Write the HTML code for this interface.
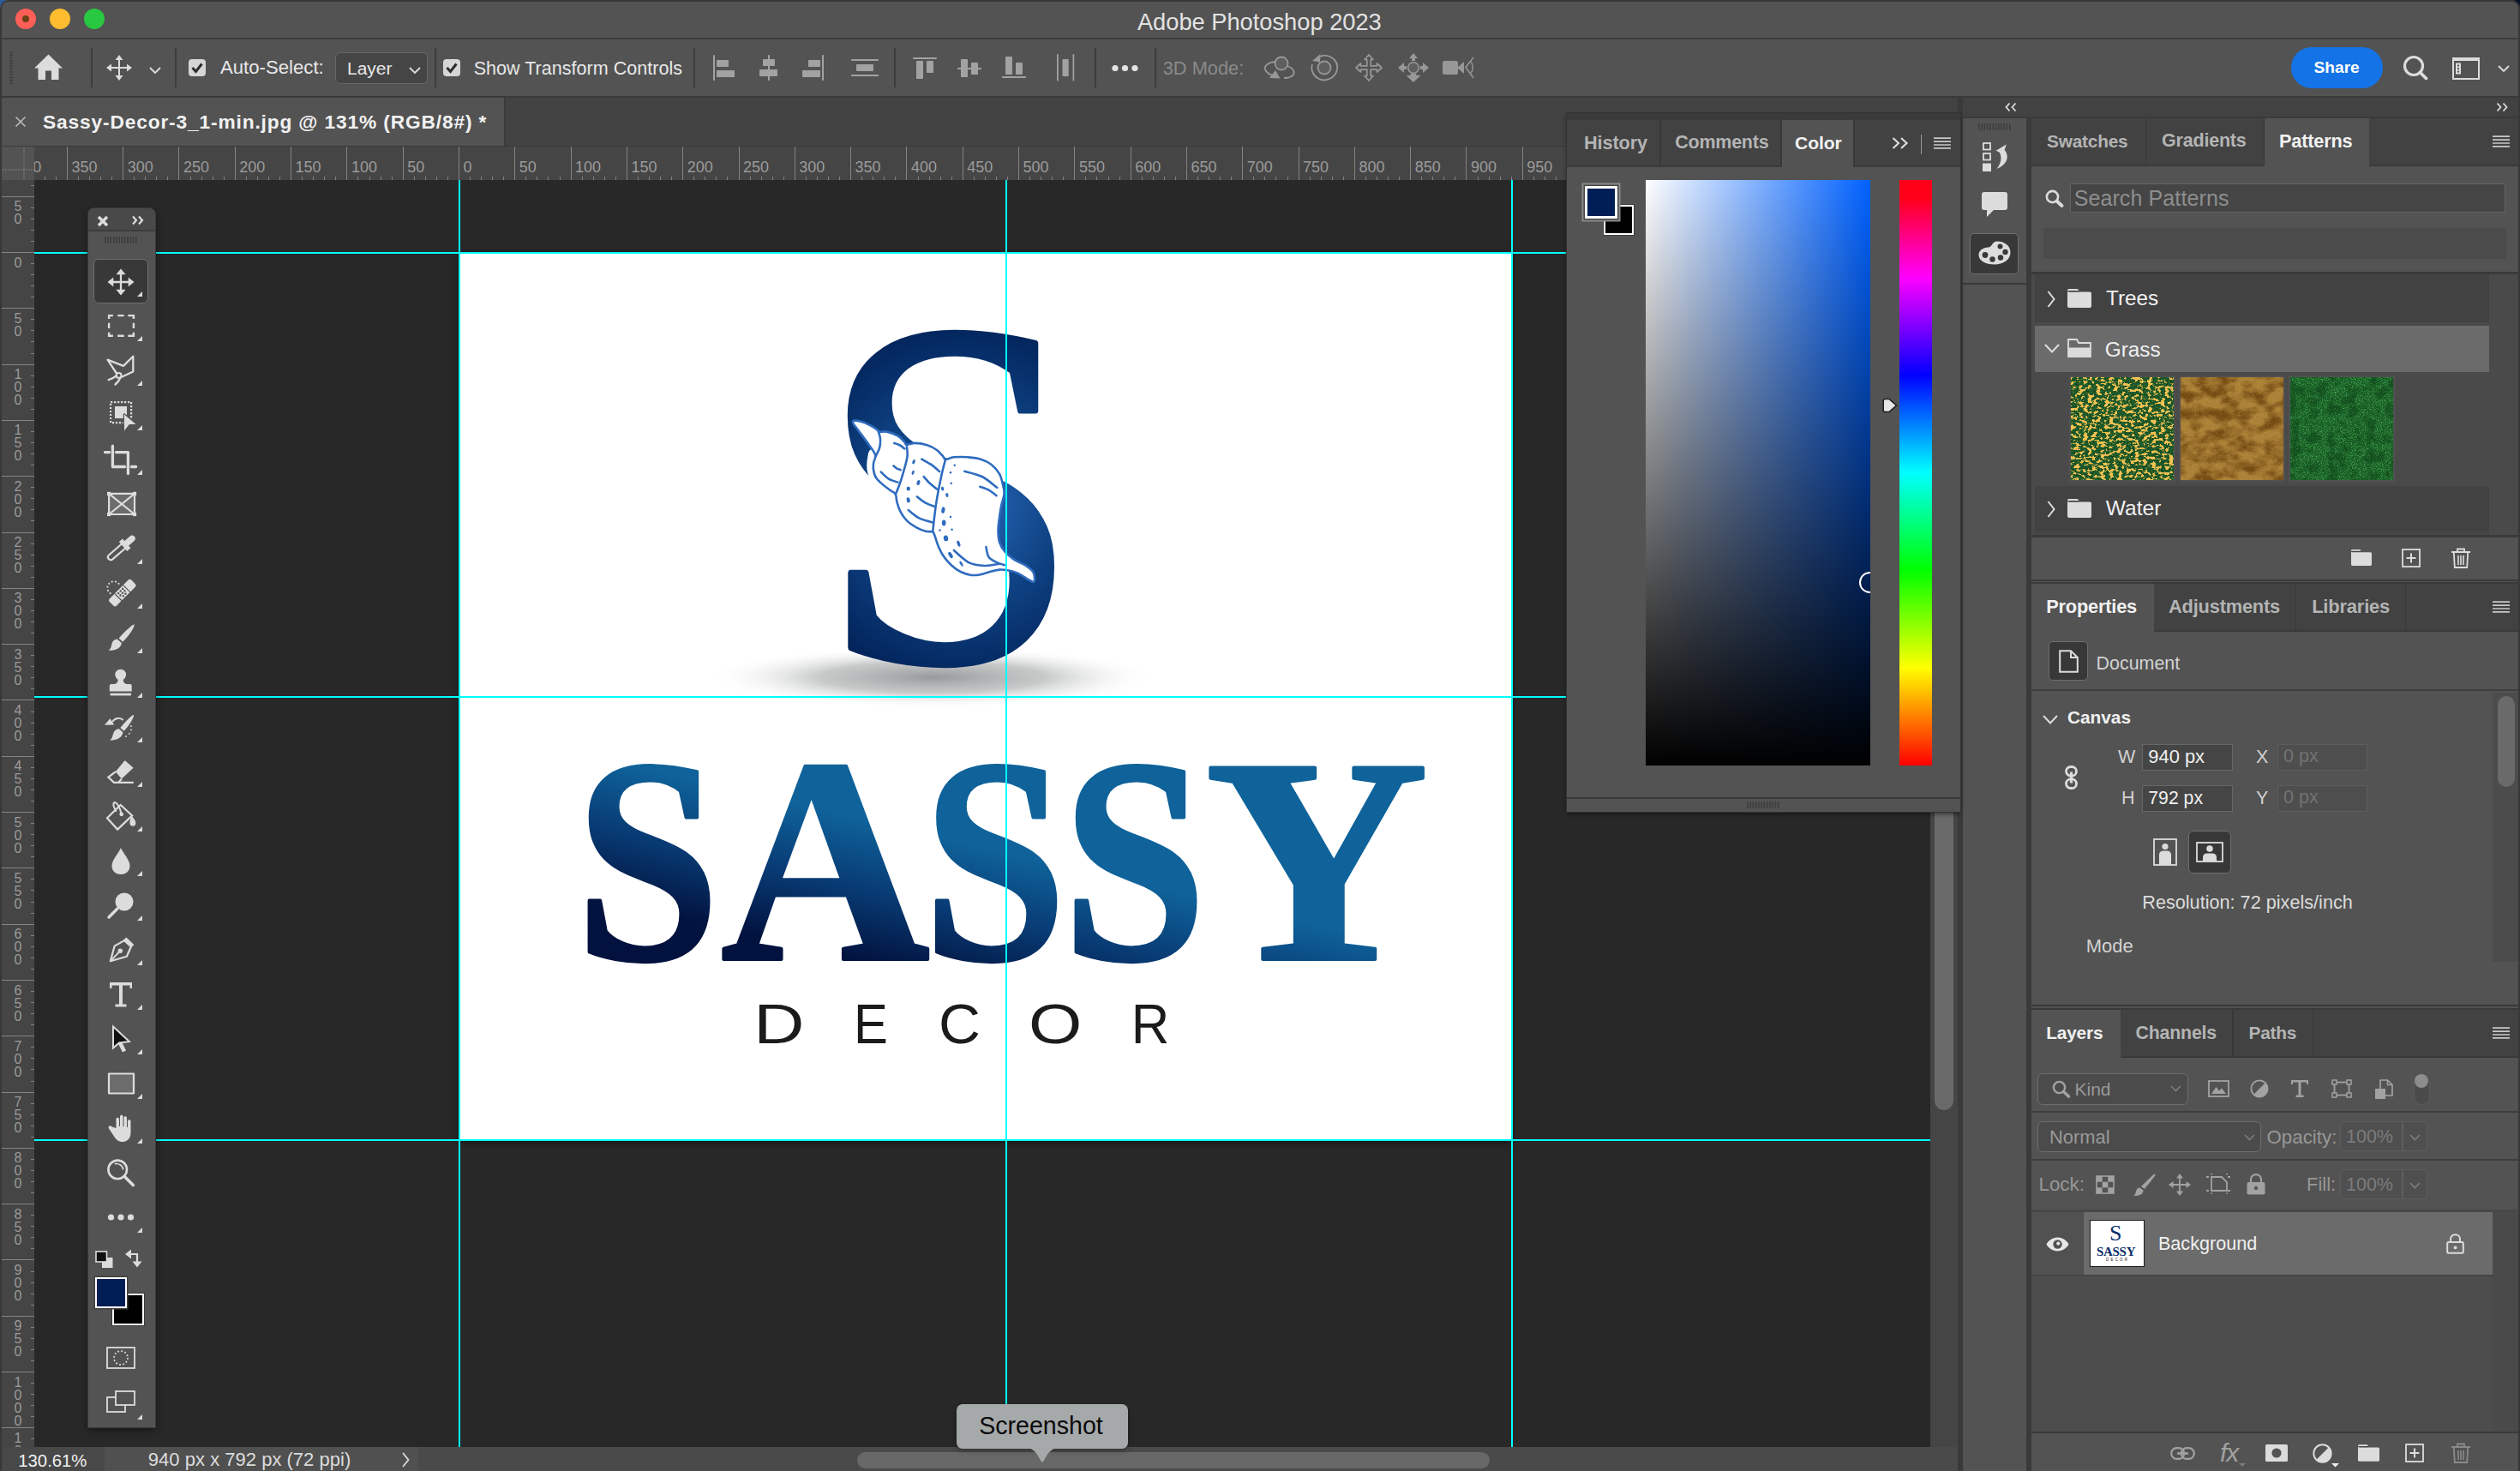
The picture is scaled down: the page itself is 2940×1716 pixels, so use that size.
<!DOCTYPE html><html lang="en"><head><meta charset="utf-8"><title>Adobe Photoshop 2023</title><style>
html,body{margin:0;padding:0;}
html{background:linear-gradient(to right,#2b5c9c,#051225);}
body{width:2940px;height:1716px;overflow:hidden;position:relative;background:#535353;font-family:"Liberation Sans",sans-serif;color:#ddd;border-radius:10px 10px 0 0;}
.a{position:absolute;}
.t{position:absolute;white-space:nowrap;line-height:1;}
.b{font-weight:bold;}
svg{position:absolute;overflow:visible;}
</style></head><body>
<div class="a" style="left:0px;top:44px;width:2940px;height:2px;background:#3c3c3c;"></div>
<div class="a" style="left:0px;top:112px;width:2940px;height:2px;background:#3a3a3a;"></div>
<div class="a" style="left:2px;top:114px;width:2285px;height:56px;background:#424242;"></div>
<div class="a" style="left:2px;top:114px;width:586px;height:56px;background:#535353;"></div>
<div class="a" style="left:2px;top:170px;width:2285px;height:2px;background:#3a3a3a;"></div>
<div class="a" style="left:588px;top:114px;width:2px;height:56px;background:#3a3a3a;"></div>
<div class="a" style="left:2px;top:171px;width:2285px;height:39px;background:#454545;"></div>
<div class="a" style="left:2px;top:171px;width:38px;height:39px;background:#535353;"></div>
<div class="a" style="left:2px;top:210px;width:38px;height:1478px;background:#454545;"></div>
<div class="a" style="left:40px;top:210px;width:2212px;height:1478px;background:#282828;"></div>
<div class="a" style="left:2252px;top:210px;width:32px;height:1478px;background:#454545;"></div>
<div class="a" style="left:2257px;top:900px;width:22px;height:395px;background:#6a6a6a;border-radius:11px;"></div>
<div class="a" style="left:2px;top:1688px;width:2282px;height:28px;background:#4a4a4a;"></div>
<div class="a" style="left:2px;top:1688px;width:119px;height:28px;background:#484848;"></div>
<div class="a" style="left:122px;top:1688px;width:366px;height:28px;background:#505050;"></div>
<div class="a" style="left:1000px;top:1694px;width:738px;height:19px;background:#686868;border-radius:10px;"></div>
<div class="a" style="left:0px;top:12px;width:2px;height:1704px;background:#383838;"></div>
<div class="a" style="left:2938px;top:12px;width:2px;height:1704px;background:#383838;"></div>
<div class="a" style="left:0;top:0;width:2936px;height:40px;border:2px solid #383838;border-bottom:none;border-radius:10px 10px 0 0;pointer-events:none"></div>
<div class="a" style="left:2284px;top:114px;width:6px;height:1602px;background:#3a3a3a;"></div>
<div class="a" style="left:2364px;top:136px;width:6px;height:1580px;background:#3a3a3a;"></div>
<div class="a" style="left:2290px;top:114px;width:648px;height:22px;background:#424242;"></div>
<div class="a" style="left:2290px;top:136px;width:648px;height:2px;background:#3a3a3a;"></div>
<div class="a" style="left:2290px;top:138px;width:74px;height:192px;background:#535353;"></div>
<div class="a" style="left:2290px;top:330px;width:74px;height:2px;background:#3a3a3a;"></div>
<div class="a" style="left:2290px;top:332px;width:74px;height:1384px;background:#535353;"></div>
<svg class="a" style="left:40px;top:171px" width="2212" height="39" viewBox="40 171 2212 39"><rect x="52" y="206" width="1" height="4" fill="#848484"/><rect x="65" y="206" width="1" height="4" fill="#848484"/><rect x="78" y="171" width="1" height="39" fill="#848484"/><rect x="91" y="206" width="1" height="4" fill="#848484"/><rect x="104" y="206" width="1" height="4" fill="#848484"/><rect x="117" y="206" width="1" height="4" fill="#848484"/><rect x="130" y="206" width="1" height="4" fill="#848484"/><rect x="143" y="171" width="1" height="39" fill="#848484"/><rect x="156" y="206" width="1" height="4" fill="#848484"/><rect x="169" y="206" width="1" height="4" fill="#848484"/><rect x="182" y="206" width="1" height="4" fill="#848484"/><rect x="195" y="206" width="1" height="4" fill="#848484"/><rect x="208" y="171" width="1" height="39" fill="#848484"/><rect x="222" y="206" width="1" height="4" fill="#848484"/><rect x="235" y="206" width="1" height="4" fill="#848484"/><rect x="248" y="206" width="1" height="4" fill="#848484"/><rect x="261" y="206" width="1" height="4" fill="#848484"/><rect x="274" y="171" width="1" height="39" fill="#848484"/><rect x="287" y="206" width="1" height="4" fill="#848484"/><rect x="300" y="206" width="1" height="4" fill="#848484"/><rect x="313" y="206" width="1" height="4" fill="#848484"/><rect x="326" y="206" width="1" height="4" fill="#848484"/><rect x="339" y="171" width="1" height="39" fill="#848484"/><rect x="352" y="206" width="1" height="4" fill="#848484"/><rect x="365" y="206" width="1" height="4" fill="#848484"/><rect x="378" y="206" width="1" height="4" fill="#848484"/><rect x="391" y="206" width="1" height="4" fill="#848484"/><rect x="404" y="171" width="1" height="39" fill="#848484"/><rect x="417" y="206" width="1" height="4" fill="#848484"/><rect x="431" y="206" width="1" height="4" fill="#848484"/><rect x="444" y="206" width="1" height="4" fill="#848484"/><rect x="457" y="206" width="1" height="4" fill="#848484"/><rect x="470" y="171" width="1" height="39" fill="#848484"/><rect x="483" y="206" width="1" height="4" fill="#848484"/><rect x="496" y="206" width="1" height="4" fill="#848484"/><rect x="509" y="206" width="1" height="4" fill="#848484"/><rect x="522" y="206" width="1" height="4" fill="#848484"/><rect x="535" y="171" width="1" height="39" fill="#848484"/><rect x="548" y="206" width="1" height="4" fill="#848484"/><rect x="561" y="206" width="1" height="4" fill="#848484"/><rect x="574" y="206" width="1" height="4" fill="#848484"/><rect x="587" y="206" width="1" height="4" fill="#848484"/><rect x="600" y="171" width="1" height="39" fill="#848484"/><rect x="613" y="206" width="1" height="4" fill="#848484"/><rect x="626" y="206" width="1" height="4" fill="#848484"/><rect x="639" y="206" width="1" height="4" fill="#848484"/><rect x="653" y="206" width="1" height="4" fill="#848484"/><rect x="666" y="171" width="1" height="39" fill="#848484"/><rect x="679" y="206" width="1" height="4" fill="#848484"/><rect x="692" y="206" width="1" height="4" fill="#848484"/><rect x="705" y="206" width="1" height="4" fill="#848484"/><rect x="718" y="206" width="1" height="4" fill="#848484"/><rect x="731" y="171" width="1" height="39" fill="#848484"/><rect x="744" y="206" width="1" height="4" fill="#848484"/><rect x="757" y="206" width="1" height="4" fill="#848484"/><rect x="770" y="206" width="1" height="4" fill="#848484"/><rect x="783" y="206" width="1" height="4" fill="#848484"/><rect x="796" y="171" width="1" height="39" fill="#848484"/><rect x="809" y="206" width="1" height="4" fill="#848484"/><rect x="822" y="206" width="1" height="4" fill="#848484"/><rect x="835" y="206" width="1" height="4" fill="#848484"/><rect x="848" y="206" width="1" height="4" fill="#848484"/><rect x="862" y="171" width="1" height="39" fill="#848484"/><rect x="875" y="206" width="1" height="4" fill="#848484"/><rect x="888" y="206" width="1" height="4" fill="#848484"/><rect x="901" y="206" width="1" height="4" fill="#848484"/><rect x="914" y="206" width="1" height="4" fill="#848484"/><rect x="927" y="171" width="1" height="39" fill="#848484"/><rect x="940" y="206" width="1" height="4" fill="#848484"/><rect x="953" y="206" width="1" height="4" fill="#848484"/><rect x="966" y="206" width="1" height="4" fill="#848484"/><rect x="979" y="206" width="1" height="4" fill="#848484"/><rect x="992" y="171" width="1" height="39" fill="#848484"/><rect x="1005" y="206" width="1" height="4" fill="#848484"/><rect x="1018" y="206" width="1" height="4" fill="#848484"/><rect x="1031" y="206" width="1" height="4" fill="#848484"/><rect x="1044" y="206" width="1" height="4" fill="#848484"/><rect x="1057" y="171" width="1" height="39" fill="#848484"/><rect x="1071" y="206" width="1" height="4" fill="#848484"/><rect x="1084" y="206" width="1" height="4" fill="#848484"/><rect x="1097" y="206" width="1" height="4" fill="#848484"/><rect x="1110" y="206" width="1" height="4" fill="#848484"/><rect x="1123" y="171" width="1" height="39" fill="#848484"/><rect x="1136" y="206" width="1" height="4" fill="#848484"/><rect x="1149" y="206" width="1" height="4" fill="#848484"/><rect x="1162" y="206" width="1" height="4" fill="#848484"/><rect x="1175" y="206" width="1" height="4" fill="#848484"/><rect x="1188" y="171" width="1" height="39" fill="#848484"/><rect x="1201" y="206" width="1" height="4" fill="#848484"/><rect x="1214" y="206" width="1" height="4" fill="#848484"/><rect x="1227" y="206" width="1" height="4" fill="#848484"/><rect x="1240" y="206" width="1" height="4" fill="#848484"/><rect x="1253" y="171" width="1" height="39" fill="#848484"/><rect x="1266" y="206" width="1" height="4" fill="#848484"/><rect x="1279" y="206" width="1" height="4" fill="#848484"/><rect x="1293" y="206" width="1" height="4" fill="#848484"/><rect x="1306" y="206" width="1" height="4" fill="#848484"/><rect x="1319" y="171" width="1" height="39" fill="#848484"/><rect x="1332" y="206" width="1" height="4" fill="#848484"/><rect x="1345" y="206" width="1" height="4" fill="#848484"/><rect x="1358" y="206" width="1" height="4" fill="#848484"/><rect x="1371" y="206" width="1" height="4" fill="#848484"/><rect x="1384" y="171" width="1" height="39" fill="#848484"/><rect x="1397" y="206" width="1" height="4" fill="#848484"/><rect x="1410" y="206" width="1" height="4" fill="#848484"/><rect x="1423" y="206" width="1" height="4" fill="#848484"/><rect x="1436" y="206" width="1" height="4" fill="#848484"/><rect x="1449" y="171" width="1" height="39" fill="#848484"/><rect x="1462" y="206" width="1" height="4" fill="#848484"/><rect x="1475" y="206" width="1" height="4" fill="#848484"/><rect x="1488" y="206" width="1" height="4" fill="#848484"/><rect x="1502" y="206" width="1" height="4" fill="#848484"/><rect x="1515" y="171" width="1" height="39" fill="#848484"/><rect x="1528" y="206" width="1" height="4" fill="#848484"/><rect x="1541" y="206" width="1" height="4" fill="#848484"/><rect x="1554" y="206" width="1" height="4" fill="#848484"/><rect x="1567" y="206" width="1" height="4" fill="#848484"/><rect x="1580" y="171" width="1" height="39" fill="#848484"/><rect x="1593" y="206" width="1" height="4" fill="#848484"/><rect x="1606" y="206" width="1" height="4" fill="#848484"/><rect x="1619" y="206" width="1" height="4" fill="#848484"/><rect x="1632" y="206" width="1" height="4" fill="#848484"/><rect x="1645" y="171" width="1" height="39" fill="#848484"/><rect x="1658" y="206" width="1" height="4" fill="#848484"/><rect x="1671" y="206" width="1" height="4" fill="#848484"/><rect x="1684" y="206" width="1" height="4" fill="#848484"/><rect x="1697" y="206" width="1" height="4" fill="#848484"/><rect x="1710" y="171" width="1" height="39" fill="#848484"/><rect x="1724" y="206" width="1" height="4" fill="#848484"/><rect x="1737" y="206" width="1" height="4" fill="#848484"/><rect x="1750" y="206" width="1" height="4" fill="#848484"/><rect x="1763" y="206" width="1" height="4" fill="#848484"/><rect x="1776" y="171" width="1" height="39" fill="#848484"/><rect x="1789" y="206" width="1" height="4" fill="#848484"/><rect x="1802" y="206" width="1" height="4" fill="#848484"/><rect x="1815" y="206" width="1" height="4" fill="#848484"/><rect x="1828" y="206" width="1" height="4" fill="#848484"/><rect x="1841" y="171" width="1" height="39" fill="#848484"/><rect x="1854" y="206" width="1" height="4" fill="#848484"/><rect x="1867" y="206" width="1" height="4" fill="#848484"/><rect x="1880" y="206" width="1" height="4" fill="#848484"/><rect x="1893" y="206" width="1" height="4" fill="#848484"/><rect x="1906" y="171" width="1" height="39" fill="#848484"/><rect x="1919" y="206" width="1" height="4" fill="#848484"/><rect x="1933" y="206" width="1" height="4" fill="#848484"/><rect x="1946" y="206" width="1" height="4" fill="#848484"/><rect x="1959" y="206" width="1" height="4" fill="#848484"/><rect x="1972" y="171" width="1" height="39" fill="#848484"/><rect x="1985" y="206" width="1" height="4" fill="#848484"/><rect x="1998" y="206" width="1" height="4" fill="#848484"/><rect x="2011" y="206" width="1" height="4" fill="#848484"/><rect x="2024" y="206" width="1" height="4" fill="#848484"/><rect x="2037" y="171" width="1" height="39" fill="#848484"/><rect x="2050" y="206" width="1" height="4" fill="#848484"/><rect x="2063" y="206" width="1" height="4" fill="#848484"/><rect x="2076" y="206" width="1" height="4" fill="#848484"/><rect x="2089" y="206" width="1" height="4" fill="#848484"/><rect x="2102" y="171" width="1" height="39" fill="#848484"/><rect x="2115" y="206" width="1" height="4" fill="#848484"/><rect x="2128" y="206" width="1" height="4" fill="#848484"/><rect x="2142" y="206" width="1" height="4" fill="#848484"/><rect x="2155" y="206" width="1" height="4" fill="#848484"/><rect x="2168" y="171" width="1" height="39" fill="#848484"/><rect x="2181" y="206" width="1" height="4" fill="#848484"/><rect x="2194" y="206" width="1" height="4" fill="#848484"/><rect x="2207" y="206" width="1" height="4" fill="#848484"/><rect x="2220" y="206" width="1" height="4" fill="#848484"/><rect x="2233" y="171" width="1" height="39" fill="#848484"/><rect x="2246" y="206" width="1" height="4" fill="#848484"/></svg>
<div class="a" style="left:40px;top:171px;width:60px;height:39px;overflow:hidden"><div class="t" style="left:-21.9px;top:15.3px;font-size:18px;color:#9b9b9b">400</div></div>
<div id="t1" class="t" style="left:83.40px;top:186.26px;font-size:18.00px;color:#9b9b9b;">350</div>
<div id="t2" class="t" style="left:148.70px;top:186.26px;font-size:18.00px;color:#9b9b9b;">300</div>
<div id="t3" class="t" style="left:214.00px;top:186.26px;font-size:18.00px;color:#9b9b9b;">250</div>
<div id="t4" class="t" style="left:279.30px;top:186.26px;font-size:18.00px;color:#9b9b9b;">200</div>
<div id="t5" class="t" style="left:344.60px;top:186.26px;font-size:18.00px;color:#9b9b9b;">150</div>
<div id="t6" class="t" style="left:409.90px;top:186.26px;font-size:18.00px;color:#9b9b9b;">100</div>
<div id="t7" class="t" style="left:475.20px;top:186.26px;font-size:18.00px;color:#9b9b9b;">50</div>
<div id="t8" class="t" style="left:540.50px;top:186.26px;font-size:18.00px;color:#9b9b9b;">0</div>
<div id="t9" class="t" style="left:605.80px;top:186.26px;font-size:18.00px;color:#9b9b9b;">50</div>
<div id="t10" class="t" style="left:671.10px;top:186.26px;font-size:18.00px;color:#9b9b9b;">100</div>
<div id="t11" class="t" style="left:736.40px;top:186.26px;font-size:18.00px;color:#9b9b9b;">150</div>
<div id="t12" class="t" style="left:801.70px;top:186.26px;font-size:18.00px;color:#9b9b9b;">200</div>
<div id="t13" class="t" style="left:867.00px;top:186.26px;font-size:18.00px;color:#9b9b9b;">250</div>
<div id="t14" class="t" style="left:932.30px;top:186.26px;font-size:18.00px;color:#9b9b9b;">300</div>
<div id="t15" class="t" style="left:997.60px;top:186.26px;font-size:18.00px;color:#9b9b9b;">350</div>
<div id="t16" class="t" style="left:1062.90px;top:186.26px;font-size:18.00px;color:#9b9b9b;">400</div>
<div id="t17" class="t" style="left:1128.20px;top:186.26px;font-size:18.00px;color:#9b9b9b;">450</div>
<div id="t18" class="t" style="left:1193.60px;top:186.26px;font-size:18.00px;color:#9b9b9b;">500</div>
<div id="t19" class="t" style="left:1258.90px;top:186.26px;font-size:18.00px;color:#9b9b9b;">550</div>
<div id="t20" class="t" style="left:1324.20px;top:186.26px;font-size:18.00px;color:#9b9b9b;">600</div>
<div id="t21" class="t" style="left:1389.50px;top:186.26px;font-size:18.00px;color:#9b9b9b;">650</div>
<div id="t22" class="t" style="left:1454.80px;top:186.26px;font-size:18.00px;color:#9b9b9b;">700</div>
<div id="t23" class="t" style="left:1520.10px;top:186.26px;font-size:18.00px;color:#9b9b9b;">750</div>
<div id="t24" class="t" style="left:1585.40px;top:186.26px;font-size:18.00px;color:#9b9b9b;">800</div>
<div id="t25" class="t" style="left:1650.70px;top:186.26px;font-size:18.00px;color:#9b9b9b;">850</div>
<div id="t26" class="t" style="left:1716.00px;top:186.26px;font-size:18.00px;color:#9b9b9b;">900</div>
<div id="t27" class="t" style="left:1781.30px;top:186.26px;font-size:18.00px;color:#9b9b9b;">950</div>
<svg class="a" style="left:2px;top:210px" width="38" height="1478" viewBox="2 210 38 1478"><rect x="36" y="216" width="4" height="1" fill="#848484"/><rect x="2" y="229" width="38" height="1" fill="#848484"/><rect x="36" y="242" width="4" height="1" fill="#848484"/><rect x="36" y="255" width="4" height="1" fill="#848484"/><rect x="36" y="268" width="4" height="1" fill="#848484"/><rect x="36" y="281" width="4" height="1" fill="#848484"/><rect x="2" y="294" width="38" height="1" fill="#848484"/><rect x="36" y="307" width="4" height="1" fill="#848484"/><rect x="36" y="320" width="4" height="1" fill="#848484"/><rect x="36" y="333" width="4" height="1" fill="#848484"/><rect x="36" y="346" width="4" height="1" fill="#848484"/><rect x="2" y="359" width="38" height="1" fill="#848484"/><rect x="36" y="372" width="4" height="1" fill="#848484"/><rect x="36" y="385" width="4" height="1" fill="#848484"/><rect x="36" y="398" width="4" height="1" fill="#848484"/><rect x="36" y="412" width="4" height="1" fill="#848484"/><rect x="2" y="425" width="38" height="1" fill="#848484"/><rect x="36" y="438" width="4" height="1" fill="#848484"/><rect x="36" y="451" width="4" height="1" fill="#848484"/><rect x="36" y="464" width="4" height="1" fill="#848484"/><rect x="36" y="477" width="4" height="1" fill="#848484"/><rect x="2" y="490" width="38" height="1" fill="#848484"/><rect x="36" y="503" width="4" height="1" fill="#848484"/><rect x="36" y="516" width="4" height="1" fill="#848484"/><rect x="36" y="529" width="4" height="1" fill="#848484"/><rect x="36" y="542" width="4" height="1" fill="#848484"/><rect x="2" y="555" width="38" height="1" fill="#848484"/><rect x="36" y="568" width="4" height="1" fill="#848484"/><rect x="36" y="581" width="4" height="1" fill="#848484"/><rect x="36" y="594" width="4" height="1" fill="#848484"/><rect x="36" y="607" width="4" height="1" fill="#848484"/><rect x="2" y="621" width="38" height="1" fill="#848484"/><rect x="36" y="634" width="4" height="1" fill="#848484"/><rect x="36" y="647" width="4" height="1" fill="#848484"/><rect x="36" y="660" width="4" height="1" fill="#848484"/><rect x="36" y="673" width="4" height="1" fill="#848484"/><rect x="2" y="686" width="38" height="1" fill="#848484"/><rect x="36" y="699" width="4" height="1" fill="#848484"/><rect x="36" y="712" width="4" height="1" fill="#848484"/><rect x="36" y="725" width="4" height="1" fill="#848484"/><rect x="36" y="738" width="4" height="1" fill="#848484"/><rect x="2" y="751" width="38" height="1" fill="#848484"/><rect x="36" y="764" width="4" height="1" fill="#848484"/><rect x="36" y="777" width="4" height="1" fill="#848484"/><rect x="36" y="790" width="4" height="1" fill="#848484"/><rect x="36" y="803" width="4" height="1" fill="#848484"/><rect x="2" y="816" width="38" height="1" fill="#848484"/><rect x="36" y="830" width="4" height="1" fill="#848484"/><rect x="36" y="843" width="4" height="1" fill="#848484"/><rect x="36" y="856" width="4" height="1" fill="#848484"/><rect x="36" y="869" width="4" height="1" fill="#848484"/><rect x="2" y="882" width="38" height="1" fill="#848484"/><rect x="36" y="895" width="4" height="1" fill="#848484"/><rect x="36" y="908" width="4" height="1" fill="#848484"/><rect x="36" y="921" width="4" height="1" fill="#848484"/><rect x="36" y="934" width="4" height="1" fill="#848484"/><rect x="2" y="947" width="38" height="1" fill="#848484"/><rect x="36" y="960" width="4" height="1" fill="#848484"/><rect x="36" y="973" width="4" height="1" fill="#848484"/><rect x="36" y="986" width="4" height="1" fill="#848484"/><rect x="36" y="999" width="4" height="1" fill="#848484"/><rect x="2" y="1012" width="38" height="1" fill="#848484"/><rect x="36" y="1025" width="4" height="1" fill="#848484"/><rect x="36" y="1038" width="4" height="1" fill="#848484"/><rect x="36" y="1052" width="4" height="1" fill="#848484"/><rect x="36" y="1065" width="4" height="1" fill="#848484"/><rect x="2" y="1078" width="38" height="1" fill="#848484"/><rect x="36" y="1091" width="4" height="1" fill="#848484"/><rect x="36" y="1104" width="4" height="1" fill="#848484"/><rect x="36" y="1117" width="4" height="1" fill="#848484"/><rect x="36" y="1130" width="4" height="1" fill="#848484"/><rect x="2" y="1143" width="38" height="1" fill="#848484"/><rect x="36" y="1156" width="4" height="1" fill="#848484"/><rect x="36" y="1169" width="4" height="1" fill="#848484"/><rect x="36" y="1182" width="4" height="1" fill="#848484"/><rect x="36" y="1195" width="4" height="1" fill="#848484"/><rect x="2" y="1208" width="38" height="1" fill="#848484"/><rect x="36" y="1221" width="4" height="1" fill="#848484"/><rect x="36" y="1234" width="4" height="1" fill="#848484"/><rect x="36" y="1247" width="4" height="1" fill="#848484"/><rect x="36" y="1261" width="4" height="1" fill="#848484"/><rect x="2" y="1274" width="38" height="1" fill="#848484"/><rect x="36" y="1287" width="4" height="1" fill="#848484"/><rect x="36" y="1300" width="4" height="1" fill="#848484"/><rect x="36" y="1313" width="4" height="1" fill="#848484"/><rect x="36" y="1326" width="4" height="1" fill="#848484"/><rect x="2" y="1339" width="38" height="1" fill="#848484"/><rect x="36" y="1352" width="4" height="1" fill="#848484"/><rect x="36" y="1365" width="4" height="1" fill="#848484"/><rect x="36" y="1378" width="4" height="1" fill="#848484"/><rect x="36" y="1391" width="4" height="1" fill="#848484"/><rect x="2" y="1404" width="38" height="1" fill="#848484"/><rect x="36" y="1417" width="4" height="1" fill="#848484"/><rect x="36" y="1430" width="4" height="1" fill="#848484"/><rect x="36" y="1443" width="4" height="1" fill="#848484"/><rect x="36" y="1456" width="4" height="1" fill="#848484"/><rect x="2" y="1469" width="38" height="1" fill="#848484"/><rect x="36" y="1483" width="4" height="1" fill="#848484"/><rect x="36" y="1496" width="4" height="1" fill="#848484"/><rect x="36" y="1509" width="4" height="1" fill="#848484"/><rect x="36" y="1522" width="4" height="1" fill="#848484"/><rect x="2" y="1535" width="38" height="1" fill="#848484"/><rect x="36" y="1548" width="4" height="1" fill="#848484"/><rect x="36" y="1561" width="4" height="1" fill="#848484"/><rect x="36" y="1574" width="4" height="1" fill="#848484"/><rect x="36" y="1587" width="4" height="1" fill="#848484"/><rect x="2" y="1600" width="38" height="1" fill="#848484"/><rect x="36" y="1613" width="4" height="1" fill="#848484"/><rect x="36" y="1626" width="4" height="1" fill="#848484"/><rect x="36" y="1639" width="4" height="1" fill="#848484"/><rect x="36" y="1652" width="4" height="1" fill="#848484"/><rect x="2" y="1665" width="38" height="1" fill="#848484"/><rect x="36" y="1678" width="4" height="1" fill="#848484"/></svg>
<div class="a" style="left:2px;top:210px;width:38px;height:1478px;overflow:hidden">
<div class="t" style="left:13px;top:23.2px;font-size:16px;color:#9b9b9b;width:12px;text-align:center">5</div>
<div class="t" style="left:13px;top:38.2px;font-size:16px;color:#9b9b9b;width:12px;text-align:center">0</div>
<div class="t" style="left:13px;top:88.5px;font-size:16px;color:#9b9b9b;width:12px;text-align:center">0</div>
<div class="t" style="left:13px;top:153.8px;font-size:16px;color:#9b9b9b;width:12px;text-align:center">5</div>
<div class="t" style="left:13px;top:168.8px;font-size:16px;color:#9b9b9b;width:12px;text-align:center">0</div>
<div class="t" style="left:13px;top:219.1px;font-size:16px;color:#9b9b9b;width:12px;text-align:center">1</div>
<div class="t" style="left:13px;top:234.1px;font-size:16px;color:#9b9b9b;width:12px;text-align:center">0</div>
<div class="t" style="left:13px;top:249.1px;font-size:16px;color:#9b9b9b;width:12px;text-align:center">0</div>
<div class="t" style="left:13px;top:284.4px;font-size:16px;color:#9b9b9b;width:12px;text-align:center">1</div>
<div class="t" style="left:13px;top:299.4px;font-size:16px;color:#9b9b9b;width:12px;text-align:center">5</div>
<div class="t" style="left:13px;top:314.4px;font-size:16px;color:#9b9b9b;width:12px;text-align:center">0</div>
<div class="t" style="left:13px;top:349.7px;font-size:16px;color:#9b9b9b;width:12px;text-align:center">2</div>
<div class="t" style="left:13px;top:364.7px;font-size:16px;color:#9b9b9b;width:12px;text-align:center">0</div>
<div class="t" style="left:13px;top:379.7px;font-size:16px;color:#9b9b9b;width:12px;text-align:center">0</div>
<div class="t" style="left:13px;top:415.0px;font-size:16px;color:#9b9b9b;width:12px;text-align:center">2</div>
<div class="t" style="left:13px;top:430.0px;font-size:16px;color:#9b9b9b;width:12px;text-align:center">5</div>
<div class="t" style="left:13px;top:445.0px;font-size:16px;color:#9b9b9b;width:12px;text-align:center">0</div>
<div class="t" style="left:13px;top:480.3px;font-size:16px;color:#9b9b9b;width:12px;text-align:center">3</div>
<div class="t" style="left:13px;top:495.3px;font-size:16px;color:#9b9b9b;width:12px;text-align:center">0</div>
<div class="t" style="left:13px;top:510.3px;font-size:16px;color:#9b9b9b;width:12px;text-align:center">0</div>
<div class="t" style="left:13px;top:545.6px;font-size:16px;color:#9b9b9b;width:12px;text-align:center">3</div>
<div class="t" style="left:13px;top:560.6px;font-size:16px;color:#9b9b9b;width:12px;text-align:center">5</div>
<div class="t" style="left:13px;top:575.6px;font-size:16px;color:#9b9b9b;width:12px;text-align:center">0</div>
<div class="t" style="left:13px;top:610.9px;font-size:16px;color:#9b9b9b;width:12px;text-align:center">4</div>
<div class="t" style="left:13px;top:625.9px;font-size:16px;color:#9b9b9b;width:12px;text-align:center">0</div>
<div class="t" style="left:13px;top:640.9px;font-size:16px;color:#9b9b9b;width:12px;text-align:center">0</div>
<div class="t" style="left:13px;top:676.2px;font-size:16px;color:#9b9b9b;width:12px;text-align:center">4</div>
<div class="t" style="left:13px;top:691.2px;font-size:16px;color:#9b9b9b;width:12px;text-align:center">5</div>
<div class="t" style="left:13px;top:706.2px;font-size:16px;color:#9b9b9b;width:12px;text-align:center">0</div>
<div class="t" style="left:13px;top:741.6px;font-size:16px;color:#9b9b9b;width:12px;text-align:center">5</div>
<div class="t" style="left:13px;top:756.6px;font-size:16px;color:#9b9b9b;width:12px;text-align:center">0</div>
<div class="t" style="left:13px;top:771.6px;font-size:16px;color:#9b9b9b;width:12px;text-align:center">0</div>
<div class="t" style="left:13px;top:806.9px;font-size:16px;color:#9b9b9b;width:12px;text-align:center">5</div>
<div class="t" style="left:13px;top:821.9px;font-size:16px;color:#9b9b9b;width:12px;text-align:center">5</div>
<div class="t" style="left:13px;top:836.9px;font-size:16px;color:#9b9b9b;width:12px;text-align:center">0</div>
<div class="t" style="left:13px;top:872.2px;font-size:16px;color:#9b9b9b;width:12px;text-align:center">6</div>
<div class="t" style="left:13px;top:887.2px;font-size:16px;color:#9b9b9b;width:12px;text-align:center">0</div>
<div class="t" style="left:13px;top:902.2px;font-size:16px;color:#9b9b9b;width:12px;text-align:center">0</div>
<div class="t" style="left:13px;top:937.5px;font-size:16px;color:#9b9b9b;width:12px;text-align:center">6</div>
<div class="t" style="left:13px;top:952.5px;font-size:16px;color:#9b9b9b;width:12px;text-align:center">5</div>
<div class="t" style="left:13px;top:967.5px;font-size:16px;color:#9b9b9b;width:12px;text-align:center">0</div>
<div class="t" style="left:13px;top:1002.8px;font-size:16px;color:#9b9b9b;width:12px;text-align:center">7</div>
<div class="t" style="left:13px;top:1017.8px;font-size:16px;color:#9b9b9b;width:12px;text-align:center">0</div>
<div class="t" style="left:13px;top:1032.8px;font-size:16px;color:#9b9b9b;width:12px;text-align:center">0</div>
<div class="t" style="left:13px;top:1068.1px;font-size:16px;color:#9b9b9b;width:12px;text-align:center">7</div>
<div class="t" style="left:13px;top:1083.1px;font-size:16px;color:#9b9b9b;width:12px;text-align:center">5</div>
<div class="t" style="left:13px;top:1098.1px;font-size:16px;color:#9b9b9b;width:12px;text-align:center">0</div>
<div class="t" style="left:13px;top:1133.4px;font-size:16px;color:#9b9b9b;width:12px;text-align:center">8</div>
<div class="t" style="left:13px;top:1148.4px;font-size:16px;color:#9b9b9b;width:12px;text-align:center">0</div>
<div class="t" style="left:13px;top:1163.4px;font-size:16px;color:#9b9b9b;width:12px;text-align:center">0</div>
<div class="t" style="left:13px;top:1198.7px;font-size:16px;color:#9b9b9b;width:12px;text-align:center">8</div>
<div class="t" style="left:13px;top:1213.7px;font-size:16px;color:#9b9b9b;width:12px;text-align:center">5</div>
<div class="t" style="left:13px;top:1228.7px;font-size:16px;color:#9b9b9b;width:12px;text-align:center">0</div>
<div class="t" style="left:13px;top:1264.0px;font-size:16px;color:#9b9b9b;width:12px;text-align:center">9</div>
<div class="t" style="left:13px;top:1279.0px;font-size:16px;color:#9b9b9b;width:12px;text-align:center">0</div>
<div class="t" style="left:13px;top:1294.0px;font-size:16px;color:#9b9b9b;width:12px;text-align:center">0</div>
<div class="t" style="left:13px;top:1329.3px;font-size:16px;color:#9b9b9b;width:12px;text-align:center">9</div>
<div class="t" style="left:13px;top:1344.3px;font-size:16px;color:#9b9b9b;width:12px;text-align:center">5</div>
<div class="t" style="left:13px;top:1359.3px;font-size:16px;color:#9b9b9b;width:12px;text-align:center">0</div>
<div class="t" style="left:13px;top:1394.6px;font-size:16px;color:#9b9b9b;width:12px;text-align:center">1</div>
<div class="t" style="left:13px;top:1409.6px;font-size:16px;color:#9b9b9b;width:12px;text-align:center">0</div>
<div class="t" style="left:13px;top:1424.6px;font-size:16px;color:#9b9b9b;width:12px;text-align:center">0</div>
<div class="t" style="left:13px;top:1439.6px;font-size:16px;color:#9b9b9b;width:12px;text-align:center">0</div>
<div class="t" style="left:13px;top:1459.9px;font-size:16px;color:#9b9b9b;width:12px;text-align:center">1</div>
<div class="t" style="left:13px;top:1474.9px;font-size:16px;color:#9b9b9b;width:12px;text-align:center">0</div>
<div class="t" style="left:13px;top:1489.9px;font-size:16px;color:#9b9b9b;width:12px;text-align:center">5</div>
<div class="t" style="left:13px;top:1504.9px;font-size:16px;color:#9b9b9b;width:12px;text-align:center">0</div>
</div>
<svg class="a" style="left:2px;top:171px" width="38" height="39"><path d="M26 1V38M1 27H38" stroke="#7a7a7a" stroke-width="1.5" stroke-dasharray="1.5 1.5" fill="none"/></svg>
<div class="a" style="left:535px;top:294px;width:1229px;height:1036px;background:#fff;box-shadow:0 3px 8px rgba(0,0,0,.45);"></div>
<svg class="a" style="left:0;top:0" width="2940" height="1716" viewBox="0 0 2940 1716">
<defs>
<radialGradient id="sh" cx="0.5" cy="0.5" r="0.5"><stop offset="0" stop-color="#8f9293" stop-opacity=".92"/><stop offset=".5" stop-color="#a2a5a6" stop-opacity=".6"/><stop offset="1" stop-color="#ffffff" stop-opacity="0"/></radialGradient>
<radialGradient id="sg" gradientUnits="userSpaceOnUse" cx="1150" cy="600" r="230"><stop offset="0" stop-color="#2566b8"/><stop offset=".5" stop-color="#0d3f80"/><stop offset="1" stop-color="#02235a"/></radialGradient>
<linearGradient id="tg" gradientUnits="userSpaceOnUse" x1="685" y1="1124" x2="742" y2="863"><stop offset="0" stop-color="#02113d"/><stop offset=".5" stop-color="#08366f"/><stop offset="1" stop-color="#0f629a"/></linearGradient>
</defs>
<ellipse cx="1088" cy="790" rx="262" ry="36" fill="url(#sh)"/><radialGradient id="g1" gradientUnits="userSpaceOnUse" cx="1125" cy="588" r="215" gradientTransform="scale(0.18224 0.17355) translate(-955.48 -769.94)"><stop offset="0" stop-color="#2a6abc"/><stop offset=".5" stop-color="#0f4384"/><stop offset="1" stop-color="#02235a"/></radialGradient><text transform="translate(955.48 769.94) scale(5.4872 5.7619)" font-family="Liberation Serif,serif" font-size="100" fill="url(#g1)" stroke="url(#g1)" stroke-width="1.245" stroke-linejoin="round">S</text><g transform="translate(980 470) scale(0.15635)" fill="none" stroke="#2f6cbf" stroke-width="16.5" stroke-linejoin="round" stroke-linecap="round"><path stroke="#fff" stroke-width="95" d="M258 385C256 396 249 431 248 450C247 469 246 482 250 500C254 518 258 542 270 560C282 578 302 594 320 610C338 626 364 643 380 655C396 667 408 668 415 682C422 696 419 719 425 740C431 761 438 787 450 810C462 833 480 860 500 880C520 900 547 917 570 930C593 943 618 950 640 958C662 966 690 972 700 975"/><path fill="#fff" d="M95 140C97 128 128 132 150 137C172 142 208 158 230 170C252 182 275 199 285 207C295 215 281 217 292 218C303 219 327 210 350 215C373 220 408 232 430 245C452 258 469 279 480 290C491 301 484 310 497 312C510 314 534 300 560 300C586 300 623 307 650 315C677 323 700 336 720 350C740 364 759 388 770 400C781 412 774 421 787 422C800 423 823 408 850 405C877 402 917 402 950 405C983 408 1020 411 1050 420C1080 429 1107 442 1130 460C1153 478 1176 505 1190 530C1204 555 1209 585 1215 610C1221 635 1227 655 1225 680C1223 705 1211 732 1205 760C1199 788 1194 818 1190 850C1186 882 1180 918 1180 950C1180 982 1182 1013 1190 1040C1198 1067 1212 1088 1230 1110C1248 1132 1275 1153 1300 1170C1325 1187 1357 1195 1380 1210C1403 1225 1428 1242 1440 1260C1452 1278 1452 1308 1452 1320C1452 1332 1449 1336 1440 1335C1431 1334 1418 1326 1400 1315C1382 1304 1353 1283 1330 1272C1307 1261 1283 1254 1260 1250C1237 1246 1213 1243 1190 1245C1167 1247 1143 1254 1120 1260C1097 1266 1073 1276 1050 1280C1027 1284 1005 1288 980 1285C955 1282 925 1272 900 1260C875 1248 852 1230 830 1210C808 1190 787 1165 770 1140C753 1115 741 1086 730 1060C719 1034 712 1001 705 985C698 969 701 966 690 962C679 958 660 963 640 958C620 953 593 943 570 930C547 917 520 900 500 880C480 860 462 833 450 810C438 787 431 761 425 740C419 719 422 696 415 682C408 668 396 667 380 655C364 643 338 626 320 610C302 594 282 578 270 560C258 542 253 518 250 500C247 482 248 466 250 450C252 434 263 415 264 402C265 389 266 389 255 370C244 351 219 317 200 290C181 263 158 235 140 210C122 185 93 152 95 140Z"/><path d="M285 207C288 217 298 244 300 265C302 286 301 312 295 335C289 358 269 391 264 402M497 312C498 327 506 365 502 400C498 435 482 483 472 520C462 557 450 593 440 620C430 647 419 672 415 682M787 422C783 438 770 484 762 520C754 556 745 600 737 640C729 680 722 720 716 760C710 800 705 846 701 880C697 914 694 948 692 962M405 300C412 302 432 308 445 315C458 322 476 338 482 342M400 470C404 473 416 485 425 490C434 495 448 498 452 500M305 515C314 523 339 552 360 565C381 578 418 588 430 592M610 420C622 427 658 445 680 460C702 475 732 503 742 512M625 550C632 558 654 585 670 600C686 615 713 635 722 642M575 700C585 708 614 733 635 745C656 757 691 768 702 772M510 800C523 810 560 845 590 860C620 875 675 887 692 892M930 510C952 517 1020 530 1060 550C1100 570 1153 618 1172 632M1045 625C1056 629 1090 639 1110 650C1130 661 1158 685 1167 692M1090 1075C1093 1088 1097 1131 1110 1150C1123 1169 1150 1180 1170 1190C1190 1200 1218 1207 1227 1210M850 1100C868 1115 922 1171 960 1190C998 1209 1042 1213 1080 1215C1118 1217 1172 1202 1190 1200"/><g fill="#2f6cbf" stroke="none"><circle cx="855" cy="465" r="8"/><circle cx="825" cy="520" r="8"/><circle cx="830" cy="600" r="8"/><circle cx="800" cy="685" r="8"/><circle cx="825" cy="850" r="8"/><circle cx="835" cy="945" r="8"/><circle cx="745" cy="950" r="8"/><ellipse cx="550" cy="440" rx="10" ry="18" transform="rotate(25 550 440)"/><ellipse cx="545" cy="520" rx="9" ry="17" transform="rotate(20 545 520)"/><ellipse cx="585" cy="595" rx="12" ry="20" transform="rotate(15 585 595)"/><ellipse cx="510" cy="640" rx="14" ry="16" transform="rotate(0 510 640)"/><ellipse cx="510" cy="725" rx="13" ry="20" transform="rotate(-10 510 725)"/><ellipse cx="765" cy="640" rx="10" ry="16" transform="rotate(-15 765 640)"/><ellipse cx="798" cy="688" rx="10" ry="16" transform="rotate(-15 798 688)"/><ellipse cx="770" cy="800" rx="13" ry="24" transform="rotate(10 770 800)"/><ellipse cx="775" cy="895" rx="15" ry="22" transform="rotate(0 775 895)"/><ellipse cx="790" cy="1010" rx="17" ry="22" transform="rotate(-10 790 1010)"/><ellipse cx="825" cy="1135" rx="13" ry="26" transform="rotate(-30 825 1135)"/><ellipse cx="885" cy="1050" rx="11" ry="24" transform="rotate(-20 885 1050)"/><ellipse cx="905" cy="1200" rx="9" ry="22" transform="rotate(-30 905 1200)"/></g></g><linearGradient id="tgw" gradientUnits="userSpaceOnUse" x1="750" y1="1124" x2="801.5" y2="903"><stop offset="0" stop-color="#02113d"/><stop offset=".27" stop-color="#02133f"/><stop offset=".62" stop-color="#083a73"/><stop offset=".98" stop-color="#0f629a"/></linearGradient><text y="1118.9" font-family="Liberation Serif,serif" font-weight="bold" font-size="341" fill="url(#tgw)" stroke="url(#tgw)" stroke-width="4" stroke-linejoin="round"><tspan x="671.26" textLength="168.31" lengthAdjust="spacingAndGlyphs">S</tspan><tspan x="841.06" textLength="243.67" lengthAdjust="spacingAndGlyphs">A</tspan><tspan x="1076.73" textLength="167.58" lengthAdjust="spacingAndGlyphs">S</tspan><tspan x="1239.26" textLength="168.31" lengthAdjust="spacingAndGlyphs">S</tspan><tspan x="1406.17" textLength="260.50" lengthAdjust="spacingAndGlyphs">Y</tspan></text><text y="1217.4" font-family="Liberation Sans,sans-serif" font-size="65.5" fill="#1b1b1b"><tspan x="879.28" textLength="59.17" lengthAdjust="spacingAndGlyphs">D</tspan><tspan x="996.10" textLength="39.87" lengthAdjust="spacingAndGlyphs">E</tspan><tspan x="1095.14" textLength="48.95" lengthAdjust="spacingAndGlyphs">C</tspan><tspan x="1199.94" textLength="62.29" lengthAdjust="spacingAndGlyphs">O</tspan><tspan x="1319.84" textLength="44.57" lengthAdjust="spacingAndGlyphs">R</tspan></text></svg>
<div class="a" style="left:535px;top:210px;width:2px;height:1478px;background:#00ffff;"></div>
<div class="a" style="left:1173px;top:210px;width:2px;height:1478px;background:#00ffff;"></div>
<div class="a" style="left:1763px;top:210px;width:2px;height:1478px;background:#00ffff;"></div>
<div class="a" style="left:40px;top:294px;width:1788px;height:2px;background:#00ffff;"></div>
<div class="a" style="left:40px;top:812px;width:1788px;height:2px;background:#00ffff;"></div>
<div class="a" style="left:40px;top:1329px;width:2212px;height:2px;background:#00ffff;"></div>
<div class="a" style="left:103px;top:243px;width:78px;height:1422px;background:#535353;border-radius:7px 7px 0 0;box-shadow:0 0 0 1px #3a3a3a,0 3px 10px rgba(0,0,0,.5);overflow:hidden"><div class="a" style="left:0;top:0;width:80px;height:25px;background:#494949"></div><div class="a" style="left:0;top:25px;width:80px;height:2px;background:#3c3c3c"></div></div>
<svg style="left:114px;top:252px" width="12" height="12" viewBox="0 0 12 12"><path d="M1 1L11 11M11 1L1 11" stroke="#dcdcdc" stroke-width="3.5" fill="none"/></svg>
<svg style="left:154px;top:252px" width="14" height="10" viewBox="0 0 14 10"><path d="M1 0.5L5 5L1 9.5M8 0.5L12 5L8 9.5" stroke="#dcdcdc" stroke-width="2.2" fill="none"/></svg>
<svg style="left:122px;top:276px" width="38" height="8" viewBox="0 0 38 8"><rect x="0.00" y="0" width="1.6" height="8" fill="#3e3e3e"/><rect x="3.27" y="0" width="1.6" height="8" fill="#3e3e3e"/><rect x="6.54" y="0" width="1.6" height="8" fill="#3e3e3e"/><rect x="9.81" y="0" width="1.6" height="8" fill="#3e3e3e"/><rect x="13.08" y="0" width="1.6" height="8" fill="#3e3e3e"/><rect x="16.35" y="0" width="1.6" height="8" fill="#3e3e3e"/><rect x="19.62" y="0" width="1.6" height="8" fill="#3e3e3e"/><rect x="22.89" y="0" width="1.6" height="8" fill="#3e3e3e"/><rect x="26.16" y="0" width="1.6" height="8" fill="#3e3e3e"/><rect x="29.43" y="0" width="1.6" height="8" fill="#3e3e3e"/><rect x="32.70" y="0" width="1.6" height="8" fill="#3e3e3e"/><rect x="35.97" y="0" width="1.6" height="8" fill="#3e3e3e"/></svg>
<div class="a" style="left:108.5px;top:302px;width:62.5px;height:49.5px;background:#383838;border:1.5px solid #6e6e6e;border-radius:6px"></div>
<svg style="left:124px;top:311px" width="34" height="34" viewBox="0 0 34 34" fill="none" stroke="#dcdcdc" stroke-width="2" stroke-linejoin="round"><path d="M17 5V31M4 18H30" stroke-width="2.3"/><path fill="#dcdcdc" stroke="none" d="M17 2.5L22.6 9.3H11.4ZM17 33.5L22.6 26.7H11.4ZM1.5 18L8.3 12.4V23.6ZM32.5 18L25.7 12.4V23.6Z"/></svg>
<svg style="left:160px;top:340px" width="6" height="6" viewBox="0 0 6 6"><path d="M6 0V6H0Z" fill="#dcdcdc"/></svg>
<svg style="left:124px;top:363px" width="34" height="34" viewBox="0 0 34 34" fill="none" stroke="#dcdcdc" stroke-width="2" stroke-linejoin="round"><path d="M3.1 9.1V5.1H7.9M13.2 5.1H20.7M25.3 5.1H31.9V9.1M31.9 13.7V20.1M31.9 24.7V28.7H25.3M20.7 28.7H13.2M7.9 28.7H3.1V24.7M3.1 20.1V13.7" stroke-width="2.4" stroke-linejoin="miter"/></svg>
<svg style="left:160px;top:392px" width="6" height="6" viewBox="0 0 6 6"><path d="M6 0V6H0Z" fill="#dcdcdc"/></svg>
<svg style="left:124px;top:415px" width="34" height="34" viewBox="0 0 34 34" fill="none" stroke="#dcdcdc" stroke-width="2" stroke-linejoin="round"><path d="M12.3 21L1.5 4.6L19.9 11.9L31.3 0.8V18.5L17.5 25" stroke-width="2.3"/><path d="M11.6 23.3C9 25.5 6 27.2 2.7 28.2M16.4 25.8C15 29 13 31.5 10.5 33.5" stroke-width="2.3" stroke-linecap="round"/><circle cx="14.6" cy="22.9" r="2.9" stroke-width="2.1"/></svg>
<svg style="left:160px;top:444px" width="6" height="6" viewBox="0 0 6 6"><path d="M6 0V6H0Z" fill="#dcdcdc"/></svg>
<svg style="left:124px;top:467px" width="34" height="34" viewBox="0 0 34 34" fill="none" stroke="#dcdcdc" stroke-width="2" stroke-linejoin="round"><rect x="5.1" y="2.1" width="24" height="24" stroke-width="2.2" stroke-dasharray="2.2 1.8" stroke-linejoin="miter"/><rect x="10" y="7" width="14" height="14" fill="#dcdcdc" stroke="none"/><path d="M21 16.5L34.5 28H26.8L21 35.5Z" fill="#dcdcdc" stroke="#535353" stroke-width="2.4" paint-order="stroke"/></svg>
<svg style="left:160px;top:496px" width="6" height="6" viewBox="0 0 6 6"><path d="M6 0V6H0Z" fill="#dcdcdc"/></svg>
<svg style="left:124px;top:519px" width="34" height="34" viewBox="0 0 34 34" fill="none" stroke="#dcdcdc" stroke-width="2" stroke-linejoin="round"><path d="M-1.5 8.6H3.6M7.4 1.2V25.5H21.6M11.5 8.6H25.4V33.6M29.4 25.5H34.6" stroke-width="3.3" stroke-linecap="round"/></svg>
<svg style="left:160px;top:548px" width="6" height="6" viewBox="0 0 6 6"><path d="M6 0V6H0Z" fill="#dcdcdc"/></svg>
<svg style="left:124px;top:571px" width="34" height="34" viewBox="0 0 34 34" fill="none" stroke="#dcdcdc" stroke-width="2" stroke-linejoin="round"><rect x="3.1" y="4.9" width="29.9" height="24.1" fill="#6c6c6c" stroke-width="2.2"/><path d="M3.1 4.9L33 29M33 4.9L3.1 29" stroke-width="2.1"/><rect x="1" y="2.8" width="4.2" height="4.2" fill="#dcdcdc" stroke="none"/><rect x="30.9" y="2.8" width="4.2" height="4.2" fill="#dcdcdc" stroke="none"/><rect x="1" y="26.9" width="4.2" height="4.2" fill="#dcdcdc" stroke="none"/><rect x="30.9" y="26.9" width="4.2" height="4.2" fill="#dcdcdc" stroke="none"/></svg>
<svg style="left:124px;top:623px" width="34" height="34" viewBox="0 0 34 34" fill="none" stroke="#dcdcdc" stroke-width="2" stroke-linejoin="round"><g transform="translate(20.7 13.5) rotate(-41)"><path d="M0 -3.3H-20.5C-24.8 -3.3 -24.8 3.3 -20.5 3.3H0" stroke-width="2.2"/><rect x="-1.5" y="-7.2" width="5.5" height="14.4" fill="#dcdcdc" stroke="none"/><path fill="#dcdcdc" stroke="none" d="M3 -3.7H12.5C17.5 -3.7 17.5 3.7 12.5 3.7H3Z"/></g></svg>
<svg style="left:160px;top:652px" width="6" height="6" viewBox="0 0 6 6"><path d="M6 0V6H0Z" fill="#dcdcdc"/></svg>
<svg style="left:124px;top:675px" width="34" height="34" viewBox="0 0 34 34" fill="none" stroke="#dcdcdc" stroke-width="2" stroke-linejoin="round"><g transform="translate(18.8 16.6) rotate(-45)"><rect x="-18" y="-5.8" width="36" height="11.6" rx="2.6" fill="#dcdcdc" stroke="none"/><path d="M-7 -6V6M7 -6V6" stroke="#535353" stroke-width="1.2"/><g fill="#535353" stroke="none"><circle cx="-3.6" cy="-3" r="1.25"/><circle cx="0" cy="-3" r="1.25"/><circle cx="3.6" cy="-3" r="1.25"/><circle cx="-3.6" cy="0.3" r="1.25"/><circle cx="0" cy="0.3" r="1.25"/><circle cx="3.6" cy="0.3" r="1.25"/><circle cx="-1.8" cy="3.4" r="1.25"/><circle cx="1.8" cy="3.4" r="1.25"/></g></g><path d="M5.5 17.5A7.5 7.5 0 1 1 16 8.5" stroke-width="1.9" stroke-dasharray="1.9 2.3"/></svg>
<svg style="left:160px;top:704px" width="6" height="6" viewBox="0 0 6 6"><path d="M6 0V6H0Z" fill="#dcdcdc"/></svg>
<svg style="left:124px;top:727px" width="34" height="34" viewBox="0 0 34 34" fill="none" stroke="#dcdcdc" stroke-width="2" stroke-linejoin="round"><path fill="#dcdcdc" stroke="none" d="M32.5 1.5C33.8 3 27.5 14 19.2 21.8L14.6 17.6C22 9 31 1 32.5 1.5Z"/><path fill="#dcdcdc" stroke="none" d="M13 18.8L17.8 23C17.5 29 11 32.5 2.5 31.5C6.5 29.5 5.5 25 7.5 21.5C9 19 11.5 18.3 13 18.8Z"/></svg>
<svg style="left:160px;top:756px" width="6" height="6" viewBox="0 0 6 6"><path d="M6 0V6H0Z" fill="#dcdcdc"/></svg>
<svg style="left:124px;top:779px" width="34" height="34" viewBox="0 0 34 34" fill="none" stroke="#dcdcdc" stroke-width="2" stroke-linejoin="round"><circle cx="16.7" cy="8.1" r="6.4" fill="#dcdcdc" stroke="none"/><path fill="#dcdcdc" stroke="none" d="M13.8 12H19.6C19.6 15.5 20.5 18.8 24 18.9H27.5C29 18.9 29.7 19.8 29.7 21V27.4H3.8V21C3.8 19.8 4.5 18.9 6 18.9H9.4C12.9 18.8 13.8 15.5 13.8 12Z"/><rect x="4.6" y="29.7" width="24.4" height="2.7" fill="#dcdcdc" stroke="none"/></svg>
<svg style="left:160px;top:808px" width="6" height="6" viewBox="0 0 6 6"><path d="M6 0V6H0Z" fill="#dcdcdc"/></svg>
<svg style="left:124px;top:831px" width="34" height="34" viewBox="0 0 34 34" fill="none" stroke="#dcdcdc" stroke-width="2" stroke-linejoin="round"><path fill="#dcdcdc" stroke="none" d="M32 3C33.2 4.3 27.5 14.5 20.6 21.8L16.4 18C22.5 10.5 30.5 2.6 32 3Z"/><path fill="#dcdcdc" stroke="none" d="M15 19.2L19.4 23.2C19 28.8 13 32.6 3.8 32.6C7.8 30.5 7 26.4 9 22.8C10.5 20 13.3 18.8 15 19.2Z"/><path d="M7 11C10 6.5 16 5.5 19.6 9" stroke-width="1.9"/><path fill="#dcdcdc" stroke="none" d="M-2 14.8L9.2 14.6L4.4 7.2Z"/><rect x="28.1" y="15.3" width="1.7" height="1.7" fill="#dcdcdc" stroke="none"/><rect x="28.1" y="19.6" width="1.7" height="1.7" fill="#dcdcdc" stroke="none"/><rect x="25.9" y="23.9" width="1.7" height="1.7" fill="#dcdcdc" stroke="none"/><rect x="22.1" y="27.2" width="1.7" height="1.7" fill="#dcdcdc" stroke="none"/></svg>
<svg style="left:160px;top:860px" width="6" height="6" viewBox="0 0 6 6"><path d="M6 0V6H0Z" fill="#dcdcdc"/></svg>
<svg style="left:124px;top:883px" width="34" height="34" viewBox="0 0 34 34" fill="none" stroke="#dcdcdc" stroke-width="2" stroke-linejoin="round"><path fill="#dcdcdc" stroke="none" d="M21.7 4.1L31.6 12.7L17.9 25.5L10.8 17.2Z"/><path d="M11 17.2L2.4 23.6L8.9 29.9H14L18 25.4M8.9 29.9H31.8" stroke-width="2.2" stroke-linejoin="miter"/></svg>
<svg style="left:160px;top:912px" width="6" height="6" viewBox="0 0 6 6"><path d="M6 0V6H0Z" fill="#dcdcdc"/></svg>
<svg style="left:124px;top:935px" width="34" height="34" viewBox="0 0 34 34" fill="none" stroke="#dcdcdc" stroke-width="2" stroke-linejoin="round"><path d="M16.7 4L30.2 16.4L13.1 32.6L1 19.3Z" stroke-width="2.2" stroke-linejoin="miter"/><path d="M17.5 14.5C16.5 8.5 13.5 2.5 10.8 1.3C8.6 0.5 7.6 2.6 9 6.6L11.2 11" stroke-width="2" stroke-linecap="round"/><circle cx="17.7" cy="14.8" r="2.4" fill="#dcdcdc" stroke="none"/><path fill="#dcdcdc" stroke="none" d="M29.5 17C32.5 20 35.2 23.5 34.2 26.6C33.2 29.6 28.6 29.6 27.6 26.6C26.8 23.6 28.3 20 29.5 17Z"/></svg>
<svg style="left:160px;top:964px" width="6" height="6" viewBox="0 0 6 6"><path d="M6 0V6H0Z" fill="#dcdcdc"/></svg>
<svg style="left:124px;top:987px" width="34" height="34" viewBox="0 0 34 34" fill="none" stroke="#dcdcdc" stroke-width="2" stroke-linejoin="round"><path fill="#dcdcdc" stroke="none" d="M17 2C20 9 27.5 16 27.5 23C27.5 29 23 33 17 33C11 33 6.5 29 6.5 23C6.5 16 14 9 17 2Z"/></svg>
<svg style="left:160px;top:1016px" width="6" height="6" viewBox="0 0 6 6"><path d="M6 0V6H0Z" fill="#dcdcdc"/></svg>
<svg style="left:124px;top:1039px" width="34" height="34" viewBox="0 0 34 34" fill="none" stroke="#dcdcdc" stroke-width="2" stroke-linejoin="round"><circle cx="21" cy="13" r="10.5" fill="#dcdcdc" stroke="none"/><path d="M13 21L3 31" stroke-width="3.4" stroke-linecap="round"/></svg>
<svg style="left:160px;top:1068px" width="6" height="6" viewBox="0 0 6 6"><path d="M6 0V6H0Z" fill="#dcdcdc"/></svg>
<svg style="left:124px;top:1091px" width="34" height="34" viewBox="0 0 34 34" fill="none" stroke="#dcdcdc" stroke-width="2" stroke-linejoin="round"><path d="M9.6 12.6L21 6.1L28.9 13.3L23.9 24.7L4.8 30.3Z" stroke-width="2.2"/><path d="M5.3 29.7L15.5 19" stroke-width="1.9"/><circle cx="16.3" cy="18.3" r="2.7" fill="#dcdcdc" stroke="none"/><path fill="#dcdcdc" stroke="none" d="M20 5.6L23.4 2.6L32.3 11.1L29.2 14.6Z"/></svg>
<svg style="left:160px;top:1120px" width="6" height="6" viewBox="0 0 6 6"><path d="M6 0V6H0Z" fill="#dcdcdc"/></svg>
<svg style="left:124px;top:1143px" width="34" height="34" viewBox="0 0 34 34" fill="none" stroke="#dcdcdc" stroke-width="2" stroke-linejoin="round"><path fill="#dcdcdc" stroke="none" d="M4 3H30V10H27.5V6.5H19V28.5H23.5V31.5H10.5V28.5H15V6.5H6.5V10H4Z"/></svg>
<svg style="left:160px;top:1172px" width="6" height="6" viewBox="0 0 6 6"><path d="M6 0V6H0Z" fill="#dcdcdc"/></svg>
<svg style="left:124px;top:1195px" width="34" height="34" viewBox="0 0 34 34" fill="none" stroke="#dcdcdc" stroke-width="2" stroke-linejoin="round"><path d="M16 21.5L21 31.5" stroke-width="4.6" stroke-linecap="butt"/><path d="M8 2.5V27.5L15 21.5L26.8 20Z" fill="#111" stroke="#dcdcdc" stroke-width="2" stroke-linejoin="miter"/></svg>
<svg style="left:160px;top:1224px" width="6" height="6" viewBox="0 0 6 6"><path d="M6 0V6H0Z" fill="#dcdcdc"/></svg>
<svg style="left:124px;top:1247px" width="34" height="34" viewBox="0 0 34 34" fill="none" stroke="#dcdcdc" stroke-width="2" stroke-linejoin="round"><rect x="3" y="5.5" width="29" height="23" fill="#6c6c6c" stroke="#dcdcdc" stroke-width="2.2"/></svg>
<svg style="left:160px;top:1276px" width="6" height="6" viewBox="0 0 6 6"><path d="M6 0V6H0Z" fill="#dcdcdc"/></svg>
<svg style="left:124px;top:1299px" width="34" height="34" viewBox="0 0 34 34" fill="none" stroke="#dcdcdc" stroke-width="2" stroke-linejoin="round"><path fill="#dcdcdc" stroke="none" d="M11.5 17V6.5C11.5 4 15 4 15 6.5V15H16V3.5C16 1 19.5 1 19.5 3.5V15H20.5V5C20.5 2.5 24 2.5 24 5V16H25V9C25 6.5 28.5 6.5 28.5 9V22C28.5 29 24.5 33 19 33C14 33 11.5 30.5 9 26.5L3 17.5C1.5 15 4.5 13 6.5 15.5Z"/></svg>
<svg style="left:160px;top:1328px" width="6" height="6" viewBox="0 0 6 6"><path d="M6 0V6H0Z" fill="#dcdcdc"/></svg>
<svg style="left:124px;top:1351px" width="34" height="34" viewBox="0 0 34 34" fill="none" stroke="#dcdcdc" stroke-width="2" stroke-linejoin="round"><circle cx="13.2" cy="13.4" r="10.8" stroke-width="2.6"/><path d="M21.3 21.5L31.3 31.5" stroke-width="3.6" stroke-linecap="round"/><path d="M10.5 6.6C15 6 19 8.8 19.6 12.8" stroke-width="1.7" stroke-linecap="round"/></svg>
<svg style="left:124px;top:1403px" width="34" height="34" viewBox="0 0 34 34" fill="none" stroke="#dcdcdc" stroke-width="2" stroke-linejoin="round"><circle cx="5.5" cy="17" r="3.6" fill="#dcdcdc" stroke="none"/><circle cx="17" cy="17" r="3.6" fill="#dcdcdc" stroke="none"/><circle cx="28.5" cy="17" r="3.6" fill="#dcdcdc" stroke="none"/></svg>
<svg style="left:160px;top:1432px" width="6" height="6" viewBox="0 0 6 6"><path d="M6 0V6H0Z" fill="#dcdcdc"/></svg>
<svg style="left:111px;top:1459px" width="22" height="21" viewBox="0 0 22 21"><rect x="8" y="8" width="12.5" height="12" fill="#dcdcdc"/><rect x="1" y="1" width="12.5" height="12" fill="#111" stroke="#dcdcdc" stroke-width="1.6"/></svg>
<svg style="left:146px;top:1457px" width="21" height="22" viewBox="0 0 21 22"><path d="M5 6H14V16" stroke="#dcdcdc" stroke-width="2.2" fill="none"/><path fill="#dcdcdc" d="M0 6L7 0.5V11.5ZM14 21.5L8.5 14.5H19.5Z"/></svg>
<div class="a" style="left:131px;top:1509px;width:33px;height:33px;background:#000;border:2.5px solid #fff;box-shadow:0 0 0 1px #3a3a3a"></div>
<div class="a" style="left:111px;top:1490px;width:33px;height:32px;background:#011d55;border:2.5px solid #fff;box-shadow:0 0 0 1.5px #404040"></div>
<svg style="left:124px;top:1571px" width="34" height="26" viewBox="0 0 34 26"><rect x="1" y="1" width="32" height="24" fill="none" stroke="#dcdcdc" stroke-width="1.8"/><circle cx="17" cy="13" r="8" fill="none" stroke="#dcdcdc" stroke-width="1.8" stroke-dasharray="1.8 2.4"/></svg>
<svg style="left:124px;top:1622px" width="34" height="26" viewBox="0 0 34 26"><rect x="1" y="8" width="21" height="17" fill="none" stroke="#dcdcdc" stroke-width="1.8"/><rect x="11" y="1" width="22" height="16" fill="#535353" stroke="#dcdcdc" stroke-width="1.8"/></svg>
<svg style="left:160px;top:1650px" width="6" height="6" viewBox="0 0 6 6"><path d="M6 0V6H0Z" fill="#dcdcdc"/></svg>
<div class="a" style="left:1828px;top:132px;width:459px;height:815px;background:#535353;box-shadow:0 0 0 1px #333,0 3px 5px rgba(0,0,0,.45)"></div>
<div class="a" style="left:1828px;top:132px;width:459px;height:8px;background:#3a3a3a;"></div>
<div class="a" style="left:1828px;top:140px;width:459px;height:54px;background:#424242;"></div>
<div class="a" style="left:1828px;top:193px;width:459px;height:2px;background:#3a3a3a;"></div>
<div class="a" style="left:1936px;top:140px;width:1.5px;height:54px;background:#383838;"></div>
<div class="a" style="left:2077px;top:140px;width:1.5px;height:54px;background:#383838;"></div>
<div class="a" style="left:2078.5px;top:140px;width:83.5px;height:56px;background:#535353;"></div>
<div class="a" style="left:2162px;top:140px;width:1.5px;height:54px;background:#383838;"></div>
<div id="t28" class="t b" style="left:1847.99px;top:155.85px;font-size:21.68px;color:#b4b4b4;letter-spacing:-0.1px">History</div>
<div id="t29" class="t b" style="left:1954.20px;top:156.03px;font-size:21.46px;color:#b4b4b4;letter-spacing:-0.2px">Comments</div>
<div id="t30" class="t b" style="left:2094.00px;top:156.32px;font-size:21.12px;color:#f2f2f2;letter-spacing:-0.1px">Color</div>
<svg style="left:2207px;top:160px" width="20" height="14" viewBox="0 0 20 14"><path d="M1.5 1L8 7L1.5 13M11 1L17.5 7L11 13" stroke="#dcdcdc" stroke-width="2.2" fill="none"/></svg>
<div class="a" style="left:2240.5px;top:157px;width:1.6px;height:23px;background:#9a9a9a;"></div>
<svg style="left:2256px;top:160px" width="20" height="14" viewBox="0 0 20 14"><path d="M0 1.2H20M0 5.1H20M0 9H20M0 12.9H20" stroke="#c8c8c8" stroke-width="1.7"/></svg>
<div class="a" style="left:1871px;top:239px;width:31px;height:31px;background:#000;border:2.5px solid #fff;box-shadow:0 0 0 1px #3c3c3c"></div>
<div class="a" style="left:1849px;top:217px;width:32px;height:32px;background:#011d55;border:3px solid #fff;box-shadow:0 0 0 1.5px #444,0 0 0 3.5px #8a8a8a"></div>
<div class="a" style="left:1920px;top:210px;width:262px;height:683px;background:linear-gradient(to bottom,rgba(0,0,0,0),#000),linear-gradient(to right,#fff,#0061ff)"></div>
<div class="a" style="left:2216px;top:210px;width:38px;height:683px;background:linear-gradient(to bottom,#ff0018 0%,#ff0018 3%,#ff00ff 16.67%,#0000ff 33.33%,#00ffff 50%,#00ff00 66.67%,#ffff00 83.33%,#ff0000 100%)"></div>
<svg style="left:2196px;top:464px" width="18" height="18" viewBox="0 0 18 18"><path d="M3.5 1.5H8L16.5 9L8 16.5H3.5C2 16.5 1.2 15.5 1.2 14.5V3.5C1.2 2.5 2 1.5 3.5 1.5Z" fill="#e6e6e6" stroke="#1e1e1e" stroke-width="1.6"/></svg>
<div class="a" style="left:1920px;top:210px;width:262px;height:683px;overflow:hidden"><div class="a" style="left:249px;top:457px;width:21px;height:21px;border:2px solid #fff;border-radius:50%"></div></div>
<div class="a" style="left:1828px;top:930px;width:459px;height:2px;background:#3a3a3a;"></div>
<svg style="left:2038px;top:935px" width="38" height="8" viewBox="0 0 38 8"><rect x="0.00" y="0" width="1.6" height="8" fill="#3e3e3e"/><rect x="3.27" y="0" width="1.6" height="8" fill="#3e3e3e"/><rect x="6.54" y="0" width="1.6" height="8" fill="#3e3e3e"/><rect x="9.81" y="0" width="1.6" height="8" fill="#3e3e3e"/><rect x="13.08" y="0" width="1.6" height="8" fill="#3e3e3e"/><rect x="16.35" y="0" width="1.6" height="8" fill="#3e3e3e"/><rect x="19.62" y="0" width="1.6" height="8" fill="#3e3e3e"/><rect x="22.89" y="0" width="1.6" height="8" fill="#3e3e3e"/><rect x="26.16" y="0" width="1.6" height="8" fill="#3e3e3e"/><rect x="29.43" y="0" width="1.6" height="8" fill="#3e3e3e"/><rect x="32.70" y="0" width="1.6" height="8" fill="#3e3e3e"/><rect x="35.97" y="0" width="1.6" height="8" fill="#3e3e3e"/></svg>
<svg style="left:2339px;top:120px" width="14" height="10" viewBox="0 0 14 10"><path d="M5.5 0.5L1.5 5L5.5 9.5M12.5 0.5L8.5 5L12.5 9.5" stroke="#dcdcdc" stroke-width="1.8" fill="none"/></svg>
<svg style="left:2912px;top:120px" width="14" height="10" viewBox="0 0 14 10"><path d="M1.5 0.5L5.5 5L1.5 9.5M8.5 0.5L12.5 5L8.5 9.5" stroke="#dcdcdc" stroke-width="1.8" fill="none"/></svg>
<svg style="left:2308px;top:144px" width="38" height="8" viewBox="0 0 38 8"><rect x="0.00" y="0" width="1.6" height="8" fill="#3e3e3e"/><rect x="3.27" y="0" width="1.6" height="8" fill="#3e3e3e"/><rect x="6.54" y="0" width="1.6" height="8" fill="#3e3e3e"/><rect x="9.81" y="0" width="1.6" height="8" fill="#3e3e3e"/><rect x="13.08" y="0" width="1.6" height="8" fill="#3e3e3e"/><rect x="16.35" y="0" width="1.6" height="8" fill="#3e3e3e"/><rect x="19.62" y="0" width="1.6" height="8" fill="#3e3e3e"/><rect x="22.89" y="0" width="1.6" height="8" fill="#3e3e3e"/><rect x="26.16" y="0" width="1.6" height="8" fill="#3e3e3e"/><rect x="29.43" y="0" width="1.6" height="8" fill="#3e3e3e"/><rect x="32.70" y="0" width="1.6" height="8" fill="#3e3e3e"/><rect x="35.97" y="0" width="1.6" height="8" fill="#3e3e3e"/></svg>
<svg style="left:2312px;top:165px" width="31" height="36" viewBox="0 0 31 36"><rect x="2" y="2" width="8" height="7.5" fill="none" stroke="#dcdcdc" stroke-width="1.8"/><rect x="2" y="14" width="8" height="7.5" fill="none" stroke="#dcdcdc" stroke-width="1.8"/><rect x="1" y="25.5" width="10" height="9.5" fill="#dcdcdc"/><path fill="#dcdcdc" d="M16.6 10.8L28.8 3.5L26.6 10C32.8 17 29.8 27.5 17.5 31.8C23 26 23.6 18 20.8 12.8Z"/></svg>
<svg style="left:2312px;top:224px" width="30" height="30" viewBox="0 0 30 30"><path fill="#dcdcdc" d="M3 0H27C29 0 30 1 30 3V18C30 20 29 21 27 21H14L6 29V21H3C1 21 0 20 0 18V3C0 1 1 0 3 0Z"/></svg>
<div class="a" style="left:2298px;top:272px;width:55px;height:45.5px;background:#383838;border:1.5px solid #6e6e6e;border-radius:5px"></div>
<svg style="left:2308px;top:281px" width="38" height="28" viewBox="0 0 38 28"><path fill="#dcdcdc" d="M22 0.5C31 0.5 37.5 6 37.5 13.5C37.5 22 29 27.5 19 27.5C8 27.5 0.5 23 0.5 16.5C0.5 11 6 7.5 11.5 7.5C14.5 7.5 15.5 5 17 3C18.3 1.3 20 0.5 22 0.5Z"/><g fill="#383838"><circle cx="25.5" cy="6.5" r="3"/><circle cx="31.5" cy="13" r="3.2"/><circle cx="26" cy="19.5" r="3.2"/><circle cx="16.5" cy="21.5" r="3.2"/><circle cx="8" cy="16.5" r="3.4"/></g></svg>
<div class="a" style="left:2370px;top:138px;width:568px;height:179px;background:#535353;"></div>
<div class="a" style="left:2370px;top:138px;width:568px;height:54px;background:#424242;"></div>
<div class="a" style="left:2370px;top:191.5px;width:568px;height:2px;background:#3a3a3a;"></div>
<div class="a" style="left:2502.5px;top:138px;width:1.5px;height:54px;background:#383838;"></div>
<div class="a" style="left:2641.0px;top:138px;width:1.5px;height:54px;background:#383838;"></div>
<div class="a" style="left:2642px;top:138px;width:122px;height:56px;background:#535353;"></div>
<div id="t31" class="t b" style="left:2388.00px;top:154.96px;font-size:20.84px;color:#b4b4b4;letter-spacing:-0.2px">Swatches</div>
<div id="t32" class="t b" style="left:2522.00px;top:154.40px;font-size:21.50px;color:#b4b4b4;letter-spacing:-0.2px">Gradients</div>
<div id="t33" class="t b" style="left:2658.99px;top:154.18px;font-size:21.76px;color:#f2f2f2;letter-spacing:-0.2px">Patterns</div>
<svg style="left:2908px;top:158px" width="20" height="14" viewBox="0 0 20 14"><path d="M0 1.2H20M0 5.1H20M0 9H20M0 12.9H20" stroke="#c8c8c8" stroke-width="1.7"/></svg>
<svg style="left:2386px;top:221px" width="22" height="21" viewBox="0 0 22 21"><circle cx="8.5" cy="8.5" r="6.6" fill="none" stroke="#dcdcdc" stroke-width="2.6"/><path d="M13.5 13.5L19.5 19" stroke="#dcdcdc" stroke-width="4" stroke-linecap="round"/></svg>
<div class="a" style="left:2415px;top:214px;width:506px;height:32px;background:#454545;border:1.5px solid #646464"></div>
<div id="t34" class="t" style="left:2419.64px;top:218.81px;font-size:25.03px;color:#8e8e8e;letter-spacing:0.1px">Search Patterns</div>
<div class="a" style="left:2384px;top:266px;width:540px;height:36px;background:#4b4b4b;"></div>
<div class="a" style="left:2370px;top:317px;width:568px;height:3px;background:#3a3a3a;"></div>
<div class="a" style="left:2370px;top:320px;width:568px;height:307px;background:#4a4a4a;"></div>
<div class="a" style="left:2374px;top:320px;width:530px;height:56px;background:#424242;"></div>
<div class="a" style="left:2374px;top:380px;width:530px;height:54px;background:#6b6b6b;"></div>
<div class="a" style="left:2374px;top:567px;width:530px;height:53px;background:#424242;"></div>
<div class="a" style="left:2374px;top:620px;width:530px;height:4px;background:#464646;"></div>
<div class="a" style="left:2370px;top:624px;width:568px;height:3px;background:#3a3a3a;"></div>
<svg style="left:2388px;top:339px" width="10" height="20" viewBox="0 0 10 20"><path d="M1.5 1L8.5 10L1.5 19" stroke="#dcdcdc" stroke-width="2" fill="none"/></svg>
<svg style="left:2412px;top:337px" width="28" height="22" viewBox="0 0 28 22"><path fill="#dcdcdc" d="M1.5 0H11C12.5 0 13 1 13.5 2H1.5Z M1.5 3.6H26C27.3 3.6 28 4.4 28 5.5V20C28 21.2 27.3 22 26 22H2C0.7 22 0 21.2 0 20V2C0 1 .5 0 1.5 0Z"/><path d="M0 2.8H13.8" stroke="#424242" stroke-width="1.1"/></svg>
<div id="t35" class="t" style="left:2457.00px;top:336.41px;font-size:24.32px;color:#f0f0f0;">Trees</div>
<svg style="left:2385px;top:401px" width="18" height="11" viewBox="0 0 18 11"><path d="M1 1L9.0 9.5L17 1" stroke="#dcdcdc" stroke-width="2" fill="none"/></svg>
<svg style="left:2412px;top:395px" width="28" height="22" viewBox="0 0 28 22"><path fill="none" stroke="#dcdcdc" stroke-width="1.8" d="M1 21V1H11L13 5H27V21Z"/><path fill="#dcdcdc" d="M1 10.5H27V21H1Z"/></svg>
<div id="t36" class="t" style="left:2455.78px;top:396.41px;font-size:24.32px;color:#f0f0f0;">Grass</div>
<svg style="left:2388px;top:584px" width="10" height="20" viewBox="0 0 10 20"><path d="M1.5 1L8.5 10L1.5 19" stroke="#dcdcdc" stroke-width="2" fill="none"/></svg>
<svg style="left:2412px;top:582px" width="28" height="22" viewBox="0 0 28 22"><path fill="#dcdcdc" d="M1.5 0H11C12.5 0 13 1 13.5 2H1.5Z M1.5 3.6H26C27.3 3.6 28 4.4 28 5.5V20C28 21.2 27.3 22 26 22H2C0.7 22 0 21.2 0 20V2C0 1 .5 0 1.5 0Z"/><path d="M0 2.8H13.8" stroke="#424242" stroke-width="1.1"/></svg>
<div id="t37" class="t" style="left:2456.80px;top:581.18px;font-size:24.60px;color:#f0f0f0;">Water</div>
<svg width="0" height="0" style="left:0;top:0"><defs>
<filter color-interpolation-filters="sRGB" id="f1" x="0" y="0" width="100%" height="100%"><feTurbulence type="fractalNoise" baseFrequency="0.2 0.28" numOctaves="3" seed="4" result="n"/><feColorMatrix in="n" type="matrix" values="0 0 0 0 0.95  0 0 0 0 0.76  0 0 0 0 0.32  9 9 0 0 -9.2"/></filter>
<filter color-interpolation-filters="sRGB" id="f1b" x="0" y="0" width="100%" height="100%"><feTurbulence type="fractalNoise" baseFrequency="0.5" numOctaves="2" seed="9"/><feColorMatrix type="matrix" values="0 0 0 0 0.06  0 0 0 0 0.25  0 0 0 0 0.10  0 0 0 2.4 -0.9"/></filter>
<filter color-interpolation-filters="sRGB" id="f2" x="0" y="0" width="100%" height="100%"><feTurbulence type="fractalNoise" baseFrequency="0.05 0.08" numOctaves="3" seed="2"/><feColorMatrix type="matrix" values="0 0 0 0 0.45  0 0 0 0 0.29  0 0 0 0 0.07  1.8 1.8 0 0 -1.4"/></filter>
<filter color-interpolation-filters="sRGB" id="f2b" x="0" y="0" width="100%" height="100%"><feTurbulence type="fractalNoise" baseFrequency="0.7" numOctaves="1" seed="5"/><feColorMatrix type="matrix" values="0 0 0 0 0.85  0 0 0 0 0.70  0 0 0 0 0.36  0 0 0 2.5 -1.25"/></filter>
<filter color-interpolation-filters="sRGB" id="f3" x="0" y="0" width="100%" height="100%"><feTurbulence type="fractalNoise" baseFrequency="0.8" numOctaves="2" seed="7"/><feColorMatrix type="matrix" values="0 0 0 0 0.27  0 0 0 0 0.62  0 0 0 0 0.30  0 0 0 4 -1.9"/></filter>
<filter color-interpolation-filters="sRGB" id="f3b" x="0" y="0" width="100%" height="100%"><feTurbulence type="fractalNoise" baseFrequency="0.09" numOctaves="2" seed="3"/><feColorMatrix type="matrix" values="0 0 0 0 0.03  0 0 0 0 0.22  0 0 0 0 0.07  3 3 0 0 -2.7"/></filter>
</defs></svg>
<div class="a" style="left:2414px;top:438px;width:124px;height:124px;background:#505050"></div>
<svg style="left:2416px;top:440px" width="120" height="120" viewBox="0 0 120 120"><rect width="120" height="120" fill="#246330"/><rect width="120" height="120" filter="url(#f1b)"/></svg>
<svg style="left:2416px;top:440px" width="120" height="120"><rect width="120" height="120" filter="url(#f1)"/></svg>
<div class="a" style="left:2542px;top:438px;width:124px;height:124px;background:#505050"></div>
<svg style="left:2544px;top:440px" width="120" height="120" viewBox="0 0 120 120"><rect width="120" height="120" fill="#aa8037"/><rect width="120" height="120" filter="url(#f2)"/></svg>
<svg style="left:2544px;top:440px" width="120" height="120"><rect width="120" height="120" filter="url(#f2b)" opacity=".4"/></svg>
<div class="a" style="left:2670px;top:438px;width:124px;height:124px;background:#505050"></div>
<svg style="left:2672px;top:440px" width="120" height="120" viewBox="0 0 120 120"><rect width="120" height="120" fill="#185f26"/><rect width="120" height="120" filter="url(#f3)"/></svg>
<svg style="left:2672px;top:440px" width="120" height="120"><rect width="120" height="120" filter="url(#f3b)" opacity=".45"/></svg>
<div class="a" style="left:2370px;top:627px;width:568px;height:50px;background:#535353;"></div>
<div class="a" style="left:2370px;top:676px;width:568px;height:5px;background:#3a3a3a;"></div>
<div class="a" style="left:2370px;top:678px;width:568px;height:1.4px;background:#525252;"></div>
<svg style="left:2743px;top:640px" width="24" height="21" viewBox="0 0 28 22"><path fill="#dcdcdc" d="M1.5 0H11C12.5 0 13 1 13.5 2H1.5Z M1.5 3.6H26C27.3 3.6 28 4.4 28 5.5V20C28 21.2 27.3 22 26 22H2C0.7 22 0 21.2 0 20V2C0 1 .5 0 1.5 0Z"/><path d="M0 2.8H13.8" stroke="#424242" stroke-width="1.1"/></svg>
<svg style="left:2802px;top:640px" width="22" height="22" viewBox="0 0 22 22"><rect x="1" y="1" width="20" height="20" fill="none" stroke="#dcdcdc" stroke-width="1.8"/><path d="M11 5.5V16.5M5.5 11H16.5" stroke="#dcdcdc" stroke-width="2"/></svg>
<svg style="left:2860px;top:639px" width="22" height="24" viewBox="0 0 22 24"><path d="M0 5H22" stroke="#dcdcdc" stroke-width="2"/><path d="M7 4.5V1.5H15V4.5" stroke="#dcdcdc" stroke-width="1.8" fill="none"/><path d="M2.8 5.5L3.8 23H18.2L19.2 5.5" stroke="#dcdcdc" stroke-width="1.8" fill="none"/><path d="M8 9V20M11 9V20M14 9V20" stroke="#dcdcdc" stroke-width="1.6"/></svg>
<div class="a" style="left:2370px;top:681px;width:568px;height:491px;background:#535353;"></div>
<div class="a" style="left:2370px;top:681px;width:568px;height:54px;background:#424242;"></div>
<div class="a" style="left:2370px;top:734.5px;width:568px;height:2px;background:#3a3a3a;"></div>
<div class="a" style="left:2370px;top:681px;width:142.5px;height:56px;background:#535353;"></div>
<div class="a" style="left:2677.5px;top:681px;width:1.5px;height:54px;background:#383838;"></div>
<div class="a" style="left:2805.5px;top:681px;width:1.5px;height:54px;background:#383838;"></div>
<div id="t38" class="t b" style="left:2387.17px;top:697.15px;font-size:21.80px;color:#f2f2f2;letter-spacing:-0.2px">Properties</div>
<div id="t39" class="t b" style="left:2530.00px;top:697.11px;font-size:21.84px;color:#b4b4b4;letter-spacing:-0.2px">Adjustments</div>
<div id="t40" class="t b" style="left:2697.17px;top:697.02px;font-size:21.95px;color:#b4b4b4;letter-spacing:-0.2px">Libraries</div>
<svg style="left:2908px;top:701px" width="20" height="14" viewBox="0 0 20 14"><path d="M0 1.2H20M0 5.1H20M0 9H20M0 12.9H20" stroke="#c8c8c8" stroke-width="1.7"/></svg>
<div class="a" style="left:2390px;top:748px;width:44px;height:44px;background:#383838;border:1.5px solid #6e6e6e;border-radius:5px"></div>
<svg style="left:2402px;top:758px" width="23" height="27" viewBox="0 0 23 27"><path d="M1.2 1.2H14L21.8 9V25.8H1.2Z" fill="none" stroke="#dcdcdc" stroke-width="2"/><path d="M14 1.2V9H21.8" fill="none" stroke="#dcdcdc" stroke-width="2"/></svg>
<div id="t41" class="t" style="left:2445.60px;top:764.07px;font-size:21.42px;color:#d2d2d2;">Document</div>
<div class="a" style="left:2370px;top:804px;width:568px;height:2px;background:#3e3e3e;"></div>
<div class="a" style="left:2908px;top:808px;width:30px;height:314px;background:#4c4c4c;"></div>
<div class="a" style="left:2914px;top:812px;width:20px;height:106px;background:#6a6a6a;border-radius:10px"></div>
<svg style="left:2383px;top:834px" width="18" height="11" viewBox="0 0 18 11"><path d="M1 1L9.0 9.5L17 1" stroke="#dcdcdc" stroke-width="2" fill="none"/></svg>
<div id="t42" class="t b" style="left:2411.91px;top:826.87px;font-size:20.83px;color:#f0f0f0;">Canvas</div>
<div id="t43" class="t" style="left:2471.00px;top:873.00px;font-size:21.50px;color:#d2d2d2;">W</div>
<div id="t44" class="t" style="left:2475.00px;top:920.80px;font-size:21.50px;color:#d2d2d2;">H</div>
<div id="t45" class="t" style="left:2632.00px;top:873.00px;font-size:21.50px;color:#d2d2d2;">X</div>
<div id="t46" class="t" style="left:2632.00px;top:920.80px;font-size:21.50px;color:#d2d2d2;">Y</div>
<div class="a" style="left:2498.5px;top:867.5px;width:104px;height:29px;background:#454545;border:1.5px solid #676767"></div>
<div class="a" style="left:2498.5px;top:915.5px;width:104px;height:29px;background:#454545;border:1.5px solid #676767"></div>
<div class="a" style="left:2656.5px;top:867.5px;width:103px;height:29px;background:#4e4e4e;border:1.5px solid #5d5d5d"></div>
<div class="a" style="left:2656.5px;top:915.5px;width:103px;height:29px;background:#4e4e4e;border:1.5px solid #5d5d5d"></div>
<div id="t47" class="t" style="left:2506.29px;top:871.85px;font-size:21.91px;color:#f0f0f0;">940 px</div>
<div id="t48" class="t" style="left:2506.30px;top:920.24px;font-size:21.22px;color:#f0f0f0;">792 px</div>
<div id="t49" class="t" style="left:2664.00px;top:872.20px;font-size:21.50px;color:#737373;">0 px</div>
<div id="t50" class="t" style="left:2664.00px;top:920.00px;font-size:21.50px;color:#737373;">0 px</div>
<svg style="left:2409px;top:893px" width="15" height="28" viewBox="0 0 15 28"><rect x="1.5" y="1.5" width="12" height="10.6" rx="5.3" fill="none" stroke="#dcdcdc" stroke-width="2.8"/><rect x="1.5" y="15.9" width="12" height="10.6" rx="5.3" fill="none" stroke="#dcdcdc" stroke-width="2.8"/><path d="M7.5 7.5V20.5" stroke="#dcdcdc" stroke-width="3.2"/></svg>
<svg style="left:2512px;top:978px" width="28" height="32" viewBox="0 0 28 32"><rect x="1" y="1" width="26" height="30" fill="none" stroke="#dcdcdc" stroke-width="1.8"/><circle cx="14" cy="9.5" r="3.6" fill="#dcdcdc"/><path fill="#dcdcdc" d="M7 31V19C7 16 9 14.5 12 14.5H16C19 14.5 21 16 21 19V31Z"/></svg>
<div class="a" style="left:2552.5px;top:968.5px;width:48px;height:48px;background:#383838;border:1.5px solid #6e6e6e;border-radius:6px"></div>
<svg style="left:2562px;top:982px" width="32" height="24" viewBox="0 0 32 24"><rect x="1" y="1" width="30" height="22" fill="none" stroke="#dcdcdc" stroke-width="1.8"/><circle cx="16" cy="8" r="3.8" fill="#dcdcdc"/><path fill="#dcdcdc" d="M8 23V18C8 15 10 13.5 13 13.5H19C22 13.5 24 15 24 18V23Z"/></svg>
<div id="t51" class="t" style="left:2499.26px;top:1041.86px;font-size:21.67px;color:#dcdcdc;">Resolution: 72 pixels/inch</div>
<div id="t52" class="t" style="left:2433.77px;top:1092.77px;font-size:22.01px;color:#d2d2d2;">Mode</div>
<div class="a" style="left:2370px;top:1172px;width:568px;height:6px;background:#3a3a3a;"></div>
<div class="a" style="left:2370px;top:1174px;width:568px;height:1.6px;background:#525252;"></div>
<div class="a" style="left:2370px;top:1178px;width:568px;height:538px;background:#535353;"></div>
<div class="a" style="left:2370px;top:1178px;width:568px;height:54px;background:#424242;"></div>
<div class="a" style="left:2370px;top:1231.5px;width:568px;height:2px;background:#3a3a3a;"></div>
<div class="a" style="left:2370px;top:1178px;width:104px;height:56px;background:#535353;"></div>
<div class="a" style="left:2604.0px;top:1178px;width:1.5px;height:54px;background:#383838;"></div>
<div class="a" style="left:2697.5px;top:1178px;width:1.5px;height:54px;background:#383838;"></div>
<div id="t53" class="t b" style="left:2387.22px;top:1194.94px;font-size:20.86px;color:#f2f2f2;letter-spacing:-0.2px">Layers</div>
<div id="t54" class="t b" style="left:2491.60px;top:1194.54px;font-size:21.33px;color:#b4b4b4;letter-spacing:-0.2px">Channels</div>
<div id="t55" class="t b" style="left:2623.51px;top:1194.97px;font-size:20.83px;color:#b4b4b4;letter-spacing:-0.2px">Paths</div>
<svg style="left:2908px;top:1198px" width="20" height="14" viewBox="0 0 20 14"><path d="M0 1.2H20M0 5.1H20M0 9H20M0 12.9H20" stroke="#c8c8c8" stroke-width="1.7"/></svg>
<div class="a" style="left:2377px;top:1251.5px;width:174px;height:35px;background:#4b4b4b;border:1.5px solid #6e6e6e;border-radius:6px"></div>
<svg style="left:2394px;top:1260px" width="22" height="21" viewBox="0 0 22 21"><circle cx="8.5" cy="8.5" r="6.6" fill="none" stroke="#a2a2a2" stroke-width="2.4"/><path d="M13.5 13.5L19.5 19" stroke="#a2a2a2" stroke-width="3.6" stroke-linecap="round"/></svg>
<div id="t56" class="t" style="left:2420.50px;top:1260.22px;font-size:21.00px;color:#999;">Kind</div>
<svg style="left:2532px;top:1266px" width="13" height="8" viewBox="0 0 13 8"><path d="M1 1L6.5 6.5L12 1" stroke="#7c7c7c" stroke-width="1.6" fill="none"/></svg>
<svg style="left:2576px;top:1260px" width="25" height="20" viewBox="0 0 25 20"><rect x="1" y="1" width="23" height="18" fill="none" stroke="#a2a2a2" stroke-width="1.8"/><path fill="#a2a2a2" d="M4 16L9.5 8L13 12.5L16 9.5L21 16Z"/></svg>
<svg style="left:2625px;top:1259px" width="22" height="22" viewBox="0 0 22 22"><circle cx="11" cy="11" r="9.6" fill="none" stroke="#a2a2a2" stroke-width="1.8"/><path fill="#a2a2a2" d="M18 4A9.8 9.8 0 0 1 4 18Z"/></svg>
<svg style="left:2673px;top:1260px" width="20" height="20" viewBox="0 0 20 20"><path fill="#a2a2a2" d="M0 0H20V5H18V2.5H11.5V17.5H14.5V20H5.5V17.5H8.5V2.5H2V5H0Z"/></svg>
<svg style="left:2720px;top:1259px" width="24" height="22" viewBox="0 0 24 22"><rect x="3.5" y="3.5" width="17" height="15" fill="none" stroke="#a2a2a2" stroke-width="1.8"/><g fill="#535353" stroke="#a2a2a2" stroke-width="1.5"><rect x="1" y="1" width="5" height="5"/><rect x="18" y="1" width="5" height="5"/><rect x="1" y="16" width="5" height="5"/><rect x="18" y="16" width="5" height="5"/></g></svg>
<svg style="left:2771px;top:1259px" width="21" height="23" viewBox="0 0 21 23"><path d="M6 1H14.5L20 6.5V19H6Z" fill="none" stroke="#a2a2a2" stroke-width="1.7"/><path d="M14.5 1V6.5H20" fill="none" stroke="#a2a2a2" stroke-width="1.5"/><rect x="0" y="11" width="12" height="12" fill="#a2a2a2"/></svg>
<div class="a" style="left:2816px;top:1254px;width:17px;height:33px;background:#4b4b4b;border:1px solid #5a5a5a;border-radius:9px"></div>
<div class="a" style="left:2817px;top:1253px;width:16px;height:16px;background:#8d8d8d;border-radius:50%"></div>
<div class="a" style="left:2370px;top:1296px;width:568px;height:2px;background:#3e3e3e;"></div>
<div class="a" style="left:2377px;top:1308px;width:259px;height:34px;background:#4b4b4b;border:1.5px solid #6e6e6e;border-radius:6px"></div>
<div id="t57" class="t" style="left:2391.06px;top:1315.96px;font-size:21.90px;color:#999;">Normal</div>
<svg style="left:2617.5px;top:1323px" width="13" height="8" viewBox="0 0 13 8"><path d="M1 1L6.5 6.5L12 1" stroke="#7c7c7c" stroke-width="1.6" fill="none"/></svg>
<div id="t58" class="t" style="left:2644.48px;top:1315.59px;font-size:22.34px;color:#979797;">Opacity:</div>
<div class="a" style="left:2730px;top:1308px;width:100px;height:33px;background:#4f4f4f;border:1.5px solid #5e5e5e;border-radius:6px"></div>
<div class="a" style="left:2802px;top:1309px;width:1.5px;height:34px;background:#5e5e5e;"></div>
<div id="t59" class="t" style="left:2737.00px;top:1316.30px;font-size:21.50px;color:#7b7b7b;">100%</div>
<svg style="left:2811px;top:1323px" width="13" height="8" viewBox="0 0 13 8"><path d="M1 1L6.5 6.5L12 1" stroke="#7c7c7c" stroke-width="1.6" fill="none"/></svg>
<div class="a" style="left:2370px;top:1352px;width:568px;height:2px;background:#3e3e3e;"></div>
<div id="t60" class="t" style="left:2378.44px;top:1371.04px;font-size:22.40px;color:#979797;">Lock:</div>
<svg style="left:2445px;top:1371px" width="22" height="22" viewBox="0 0 22 22"><rect x="1" y="1" width="20" height="20" fill="none" stroke="#a2a2a2" stroke-width="1.6"/><g fill="#a2a2a2"><rect x="1" y="1" width="6.7" height="6.7"/><rect x="14.3" y="1" width="6.7" height="6.7"/><rect x="7.7" y="7.7" width="6.7" height="6.7"/><rect x="1" y="14.3" width="6.7" height="6.7"/><rect x="14.3" y="14.3" width="6.7" height="6.7"/></g></svg>
<svg style="left:2488px;top:1369px" width="27" height="27" viewBox="0 0 27 27"><path fill="#a2a2a2" d="M25 0.5C26.5 0 27 1.5 26 3L14 18L10 15Z"/><path fill="#a2a2a2" d="M8.5 16.5L12.5 19.5C12.5 24 8 26.5 1 26C4 24.5 3.5 20.5 5 18.5C6 17 7.5 16.5 8.5 16.5Z"/></svg>
<svg style="left:2530px;top:1369px" width="26" height="26" viewBox="0 0 26 26"><path d="M13 3V23M3 13H23" stroke="#a2a2a2" stroke-width="1.8"/><path fill="#a2a2a2" d="M13 0L17 5.5H9ZM13 26L17 20.5H9ZM0 13L5.5 9V17ZM26 13L20.5 9V17Z"/></svg>
<svg style="left:2574px;top:1369px" width="28" height="24" viewBox="0 0 28 24"><path d="M6 4H18L24 10V20H6Z" fill="none" stroke="#a2a2a2" stroke-width="1.8"/><path d="M0 4H3M25 4H28M0 20H3M25 20H28M6 0V1.5M6 22.5V24M24 0V1.5M24 22.5V24" stroke="#a2a2a2" stroke-width="1.8"/></svg>
<svg style="left:2621px;top:1369px" width="22" height="25" viewBox="0 0 22 25"><path d="M5 11V7C5 3.5 7.5 1.2 11 1.2C14.5 1.2 17 3.5 17 7V11" fill="none" stroke="#a2a2a2" stroke-width="2.2"/><rect x="0.5" y="10" width="21" height="14.5" rx="2" fill="#a2a2a2"/><circle cx="11" cy="17" r="2.2" fill="#535353"/></svg>
<div id="t61" class="t" style="left:2691.06px;top:1371.43px;font-size:21.94px;color:#979797;">Fill:</div>
<div class="a" style="left:2730px;top:1364px;width:100px;height:33px;background:#4f4f4f;border:1.5px solid #5e5e5e;border-radius:6px"></div>
<div class="a" style="left:2802px;top:1365px;width:1.5px;height:34px;background:#5e5e5e;"></div>
<div id="t62" class="t" style="left:2737.00px;top:1372.30px;font-size:21.50px;color:#7b7b7b;">100%</div>
<svg style="left:2811px;top:1379px" width="13" height="8" viewBox="0 0 13 8"><path d="M1 1L6.5 6.5L12 1" stroke="#7c7c7c" stroke-width="1.6" fill="none"/></svg>
<div class="a" style="left:2370px;top:1411px;width:568px;height:260px;background:#4d4d4d;"></div>
<div class="a" style="left:2370px;top:1411px;width:568px;height:3px;background:#484848;"></div>
<div class="a" style="left:2370px;top:1414px;width:60px;height:73px;background:#515151;"></div>
<div class="a" style="left:2431px;top:1414px;width:477px;height:73px;background:#6b6b6b;"></div>
<div class="a" style="left:2370px;top:1487px;width:538px;height:2px;background:#444;"></div>
<div class="a" style="left:2908px;top:1414px;width:30px;height:257px;background:#4a4a4a;"></div>
<svg style="left:2387px;top:1443px" width="27" height="17" viewBox="0 0 27 17"><path fill="#e6e6e6" d="M13.5 0.5C19.5 0.5 24.5 4.5 26.5 8.5C24.5 12.5 19.5 16.5 13.5 16.5C7.5 16.5 2.5 12.5 0.5 8.5C2.5 4.5 7.5 0.5 13.5 0.5Z"/><circle cx="13.5" cy="8.5" r="5.2" fill="#515151"/><circle cx="14.3" cy="7.6" r="2.1" fill="#e6e6e6"/></svg>
<div class="a" style="left:2438px;top:1423px;width:62px;height:53px;background:#fff;border:1.5px solid #1a1a1a;overflow:hidden"><div class="t" style="left:22px;top:2px;font-family:'Liberation Serif',serif;font-size:26px;color:#0a2f6e">S</div><div class="t b" style="left:7px;top:29px;font-family:'Liberation Serif',serif;font-size:15px;color:#0b2d68;letter-spacing:-0.3px">SASSY</div><div class="t" style="left:18px;top:43.5px;font-size:4.5px;color:#222;letter-spacing:2.2px">DECOR</div></div>
<div id="t63" class="t" style="left:2517.88px;top:1439.69px;font-size:21.63px;color:#f0f0f0;">Background</div>
<svg style="left:2854px;top:1439px" width="21" height="24" viewBox="0 0 21 24"><path d="M5 10V6.5C5 3.3 7.3 1.2 10.5 1.2C13.7 1.2 16 3.3 16 6.5V10" fill="none" stroke="#dcdcdc" stroke-width="2"/><rect x="1.2" y="10" width="18.6" height="12.8" rx="1.5" fill="none" stroke="#dcdcdc" stroke-width="2"/><circle cx="10.5" cy="16.4" r="1.9" fill="#dcdcdc"/></svg>
<div class="a" style="left:2370px;top:1670px;width:568px;height:2px;background:#3a3a3a;"></div>
<div class="a" style="left:2370px;top:1672px;width:568px;height:44px;background:#535353;"></div>
<svg style="left:2532px;top:1688px" width="29" height="15" viewBox="0 0 29 15"><rect x="1.2" y="1.2" width="15" height="12.6" rx="6.3" fill="none" stroke="#a2a2a2" stroke-width="2.2"/><rect x="12.8" y="1.2" width="15" height="12.6" rx="6.3" fill="none" stroke="#a2a2a2" stroke-width="2.2"/><path d="M8 7.5H21" stroke="#a2a2a2" stroke-width="2.6"/></svg>
<div class="t" style="left:2590px;top:1680px;font-size:30px;font-style:italic;color:#a2a2a2;letter-spacing:-1px;font-family:'Liberation Sans',sans-serif">fx</div>
<svg style="left:2612px;top:1707px" width="8" height="5" viewBox="0 0 8 5"><path d="M0 0H8L4 4Z" fill="#7a7a7a"/></svg>
<svg style="left:2643px;top:1685px" width="26" height="20" viewBox="0 0 26 20"><rect width="26" height="20" rx="1.5" fill="#dcdcdc"/><circle cx="13" cy="10" r="5.6" fill="#535353"/></svg>
<svg style="left:2698px;top:1684px" width="23" height="23" viewBox="0 0 23 23"><circle cx="11.5" cy="11.5" r="10.2" fill="none" stroke="#dcdcdc" stroke-width="1.9"/><path fill="#dcdcdc" d="M19 4.2A10.3 10.3 0 0 1 4.2 19Z"/></svg>
<svg style="left:2720px;top:1707px" width="9" height="5" viewBox="0 0 9 5"><path d="M0 0H9L4.5 4.5Z" fill="#f0f0f0"/></svg>
<svg style="left:2751px;top:1685px" width="25" height="20" viewBox="0 0 28 22"><path fill="#dcdcdc" d="M1.5 0H11C12.5 0 13 1 13.5 2H1.5Z M1.5 3.6H26C27.3 3.6 28 4.4 28 5.5V20C28 21.2 27.3 22 26 22H2C0.7 22 0 21.2 0 20V2C0 1 .5 0 1.5 0Z"/><path d="M0 2.8H13.8" stroke="#424242" stroke-width="1.1"/></svg>
<svg style="left:2806px;top:1684px" width="22" height="22" viewBox="0 0 22 22"><rect x="1" y="1" width="20" height="20" fill="none" stroke="#dcdcdc" stroke-width="1.8"/><path d="M11 5.5V16.5M5.5 11H16.5" stroke="#dcdcdc" stroke-width="2"/></svg>
<svg style="left:2860px;top:1683px" width="22" height="24" viewBox="0 0 22 24"><path d="M0 5H22" stroke="#8a8a8a" stroke-width="2"/><path d="M7 4.5V1.5H15V4.5" stroke="#8a8a8a" stroke-width="1.8" fill="none"/><path d="M2.8 5.5L3.8 23H18.2L19.2 5.5" stroke="#8a8a8a" stroke-width="1.8" fill="none"/><path d="M8 9V20M11 9V20M14 9V20" stroke="#8a8a8a" stroke-width="1.6"/></svg>
<div class="a" style="left:18px;top:10px;width:24px;height:24px;border-radius:50%;background:#ff5f57"></div>
<div class="a" style="left:26px;top:18px;width:8px;height:8px;border-radius:50%;background:#6b4118"></div>
<div class="a" style="left:58px;top:10px;width:24px;height:24px;border-radius:50%;background:#febc2e"></div>
<div class="a" style="left:98px;top:10px;width:24px;height:24px;border-radius:50%;background:#28c840"></div>
<div id="t64" class="t" style="left:1326.90px;top:11.92px;font-size:27.26px;color:#e2e2e2;">Adobe Photoshop 2023</div>
<svg style="left:11px;top:60px" width="5" height="40" viewBox="0 0 5 40"><rect x="0" y="0.0" width="4" height="1.6" fill="#3e3e3e"/><rect x="0" y="3.3" width="4" height="1.6" fill="#3e3e3e"/><rect x="0" y="6.6" width="4" height="1.6" fill="#3e3e3e"/><rect x="0" y="9.9" width="4" height="1.6" fill="#3e3e3e"/><rect x="0" y="13.2" width="4" height="1.6" fill="#3e3e3e"/><rect x="0" y="16.5" width="4" height="1.6" fill="#3e3e3e"/><rect x="0" y="19.8" width="4" height="1.6" fill="#3e3e3e"/><rect x="0" y="23.1" width="4" height="1.6" fill="#3e3e3e"/><rect x="0" y="26.4" width="4" height="1.6" fill="#3e3e3e"/><rect x="0" y="29.7" width="4" height="1.6" fill="#3e3e3e"/><rect x="0" y="33.0" width="4" height="1.6" fill="#3e3e3e"/><rect x="0" y="36.3" width="4" height="1.6" fill="#3e3e3e"/></svg>
<svg style="left:40px;top:63px" width="33" height="30" viewBox="0 0 33 30"><path fill="#dcdcdc" d="M16.5 0.5L33 16.5H28.5V30H20V19.5H13V30H4.5V16.5H0Z"/></svg>
<div class="a" style="left:106.2px;top:56px;width:1.8px;height:46px;background:#3c3c3c;"></div>
<svg style="left:124px;top:64px" width="30" height="30" viewBox="0 0 30 30"><path d="M15 3V27M3 15H27" stroke="#dcdcdc" stroke-width="2"/><path fill="#dcdcdc" d="M15 0L19.5 6H10.5ZM15 30L19.5 24H10.5ZM0 15L6 10.5V19.5ZM30 15L24 10.5V19.5Z"/></svg>
<svg style="left:174px;top:77.5px" width="14" height="8.5" viewBox="0 0 14 8.5"><path d="M1 1L7.0 7.0L13 1" stroke="#dcdcdc" stroke-width="1.9" fill="none"/></svg>
<div class="a" style="left:204.2px;top:56px;width:1.8px;height:46px;background:#3c3c3c;"></div>
<div class="a" style="left:220px;top:69px;width:20px;height:20px;border-radius:4px;background:#d6d6d6"></div>
<svg style="left:220px;top:69px" width="20" height="20" viewBox="0 0 20 20"><path d="M4.5 10L8.5 14.5L15.5 5.5" stroke="#2c2c2c" stroke-width="3" fill="none"/></svg>
<div id="t65" class="t" style="left:257.00px;top:68.23px;font-size:22.17px;color:#e8e8e8;">Auto-Select:</div>
<div class="a" style="left:390.5px;top:60.5px;width:106px;height:35px;background:#454545;border:1.5px solid #676767;border-radius:6px"></div>
<div id="t66" class="t" style="left:405.04px;top:69.23px;font-size:20.99px;color:#e8e8e8;">Layer</div>
<svg style="left:477px;top:77.5px" width="14" height="8.5" viewBox="0 0 14 8.5"><path d="M1 1L7.0 7.0L13 1" stroke="#dcdcdc" stroke-width="1.9" fill="none"/></svg>
<div class="a" style="left:507.2px;top:56px;width:1.8px;height:46px;background:#3c3c3c;"></div>
<div class="a" style="left:517px;top:69px;width:20px;height:20px;border-radius:4px;background:#d6d6d6"></div>
<svg style="left:517px;top:69px" width="20" height="20" viewBox="0 0 20 20"><path d="M4.5 10L8.5 14.5L15.5 5.5" stroke="#2c2c2c" stroke-width="3" fill="none"/></svg>
<div id="t67" class="t" style="left:552.70px;top:68.74px;font-size:21.57px;color:#e8e8e8;">Show Transform Controls</div>
<div class="a" style="left:809.2px;top:56px;width:1.8px;height:46px;background:#3c3c3c;"></div>
<svg style="left:0;top:0" width="1800" height="112" viewBox="0 0 1800 112"><rect x="832" y="64" width="2" height="30" rx="0.8" fill="#a2a2a2"/><rect x="836" y="70" width="14" height="8" rx="0.8" fill="#a2a2a2"/><rect x="836" y="82" width="21" height="8" rx="0.8" fill="#a2a2a2"/><rect x="896" y="64" width="2" height="30" rx="0.8" fill="#a2a2a2"/><rect x="890" y="69" width="14" height="8" rx="0.8" fill="#a2a2a2"/><rect x="886" y="81" width="21" height="8" rx="0.8" fill="#a2a2a2"/><rect x="959" y="64" width="2" height="30" rx="0.8" fill="#a2a2a2"/><rect x="943" y="70" width="14" height="8" rx="0.8" fill="#a2a2a2"/><rect x="936" y="82" width="21" height="8" rx="0.8" fill="#a2a2a2"/><rect x="993" y="69" width="32" height="2" rx="0.8" fill="#a2a2a2"/><rect x="999" y="75" width="20" height="8" rx="0.8" fill="#a2a2a2"/><rect x="993" y="87" width="32" height="2" rx="0.8" fill="#a2a2a2"/><rect x="1065" y="67" width="28" height="2" rx="0.8" fill="#a2a2a2"/><rect x="1069" y="71" width="8" height="21" rx="0.8" fill="#a2a2a2"/><rect x="1081" y="71" width="8" height="14" rx="0.8" fill="#a2a2a2"/><rect x="1117" y="79" width="28" height="2" rx="0.8" fill="#a2a2a2"/><rect x="1121" y="69" width="8" height="21" rx="0.8" fill="#a2a2a2"/><rect x="1133" y="73" width="8" height="14" rx="0.8" fill="#a2a2a2"/><rect x="1169" y="89" width="28" height="2" rx="0.8" fill="#a2a2a2"/><rect x="1173" y="66" width="8" height="21" rx="0.8" fill="#a2a2a2"/><rect x="1185" y="73" width="8" height="14" rx="0.8" fill="#a2a2a2"/><rect x="1233" y="63" width="1.8" height="31.5" rx="0.8" fill="#a2a2a2"/><rect x="1251.5" y="63" width="1.8" height="31.5" rx="0.8" fill="#a2a2a2"/><rect x="1239.5" y="69" width="7.2" height="20" rx="0.8" fill="#a2a2a2"/></svg>
<div class="a" style="left:1043.2px;top:56px;width:1.8px;height:46px;background:#3c3c3c;"></div>
<div class="a" style="left:1277.2px;top:56px;width:1.8px;height:46px;background:#3c3c3c;"></div>
<svg style="left:1297px;top:75px" width="32" height="9" viewBox="0 0 32 9"><circle cx="4" cy="4.5" r="3.6" fill="#e4e4e4"/><circle cx="15.5" cy="4.5" r="3.6" fill="#e4e4e4"/><circle cx="27" cy="4.5" r="3.6" fill="#e4e4e4"/></svg>
<div class="a" style="left:1347.2px;top:56px;width:1.8px;height:46px;background:#3c3c3c;"></div>
<div id="t68" class="t" style="left:1356.69px;top:68.51px;font-size:21.84px;color:#8a8a8a;">3D Mode:</div>
<svg style="left:1475px;top:64px" width="36" height="30" viewBox="0 0 36 30" fill="none" stroke="#989898" stroke-width="1.8"><circle cx="20" cy="10" r="7.5" fill="#5f5f5f"/><path d="M12 8C5 9 0 12 1 17C2 21 8 24 13 25"/><path d="M27 13C33 15 36 19 34 23C32 26 27 27 23 27"/><path fill="#989898" stroke="none" d="M6 27L13 18L18.5 27.5Z"/></svg>
<svg style="left:1529px;top:62px" width="32" height="33" viewBox="0 0 32 33" fill="none" stroke="#989898" stroke-width="1.8"><circle cx="16" cy="17" r="7.5" fill="#5f5f5f"/><path d="M8 5.5C19 -2 33 7 31 19C29 29 17 35 8 29C2 25 0 18 2 13"/><path fill="#989898" stroke="none" d="M2 9L11.5 1L11 10.5Z"/></svg>
<svg style="left:1581px;top:63px" width="32" height="32" viewBox="0 0 32 32" fill="none" stroke="#989898" stroke-width="1.7" stroke-linejoin="round"><path d="M16 1L21 6.5H18.2V13.8H25.5V11L31 16L25.5 21V18.2H18.2V25.5H21L16 31L11 25.5H13.8V18.2H6.5V21L1 16L6.5 11V13.8H13.8V6.5H11Z"/></svg>
<svg style="left:1631px;top:62px" width="36" height="34" viewBox="0 0 36 34"><circle cx="18" cy="17" r="6.3" fill="#606060" stroke="#989898" stroke-width="1.6"/><path fill="#989898" d="M18 0L23 6H20V9H16V6H13ZM0 17L7 11V15H10V19H7V23ZM36 17L29 11V15H26V19H29V23ZM18 34L9.5 26H14.5V24H21.5V26H26.5Z"/></svg>
<svg style="left:1683px;top:66px" width="37" height="26" viewBox="0 0 37 26"><rect x="0" y="5" width="18" height="16" rx="2.5" fill="#989898"/><path fill="#989898" d="M17 13L25 6V20Z"/><path d="M36 1L27 12.5L36 25" fill="none" stroke="#989898" stroke-width="1.6"/><path d="M33 6C36 9 36 16 33 19" fill="none" stroke="#989898" stroke-width="1.4"/></svg>
<div class="a" style="left:2673px;top:55px;width:107px;height:48px;border-radius:24px;background:#1473e6"></div>
<div id="t69" class="t b" style="left:2699.53px;top:69.08px;font-size:19.16px;color:#fff;">Share</div>
<svg style="left:2802px;top:63px" width="32" height="32" viewBox="0 0 32 32"><circle cx="14" cy="14" r="10.5" fill="none" stroke="#dcdcdc" stroke-width="3.2"/><path d="M21.5 21.5L28.5 28.5" stroke="#dcdcdc" stroke-width="3.8" stroke-linecap="round"/></svg>
<svg style="left:2861px;top:67px" width="32" height="26" viewBox="0 0 32 26"><rect x="1" y="1" width="30" height="24" fill="none" stroke="#dcdcdc" stroke-width="2"/><rect x="1" y="1" width="30" height="3" fill="#dcdcdc"/><rect x="4" y="6.5" width="6" height="13" fill="#dcdcdc"/><rect x="6" y="8.5" width="2" height="2" fill="#535353"/><rect x="6" y="12" width="2" height="2" fill="#535353"/><rect x="6" y="15.5" width="2" height="2" fill="#535353"/></svg>
<svg style="left:2914px;top:75.5px" width="14" height="8.5" viewBox="0 0 14 8.5"><path d="M1 1L7.0 7.0L13 1" stroke="#dcdcdc" stroke-width="1.9" fill="none"/></svg>
<svg style="left:18px;top:136px" width="12" height="12" viewBox="0 0 12 12"><path d="M0.5 0.5L11.5 11.5M11.5 0.5L0.5 11.5" stroke="#b8b8b8" stroke-width="1.7"/></svg>
<div id="t70" class="t b" style="left:50.00px;top:130.75px;font-size:22.74px;color:#f2f2f2;letter-spacing:0.85px">Sassy-Decor-3_1-min.jpg @ 131% (RGB/8#) *</div>
<div id="t71" class="t" style="left:21.30px;top:1693.82px;font-size:20.29px;color:#f0f0f0;">130.61%</div>
<div id="t72" class="t" style="left:172.87px;top:1692.34px;font-size:22.04px;color:#dcdcdc;">940 px x 792 px (72 ppi)</div>
<svg style="left:469px;top:1694px" width="9" height="18" viewBox="0 0 9 18"><path d="M1 1L7.5 9L1 17" stroke="#dcdcdc" stroke-width="1.8" fill="none"/></svg>
<div class="a" style="left:1116px;top:1638px;width:200px;height:52px;border-radius:7px;background:#a6a9aa;box-shadow:0 2px 6px rgba(0,0,0,.35)"></div>
<svg style="left:1198px;top:1689px" width="36" height="18" viewBox="0 0 36 18"><path d="M0 0H36C27 0.5 23 9 19.5 15.5C18.6 17 17.4 17 16.5 15.5C13 9 9 0.5 0 0Z" fill="#a6a9aa"/></svg>
<div id="t73" class="t" style="left:1142.18px;top:1648.59px;font-size:28.60px;color:#0a0a0a;">Screenshot</div>
</body></html>
